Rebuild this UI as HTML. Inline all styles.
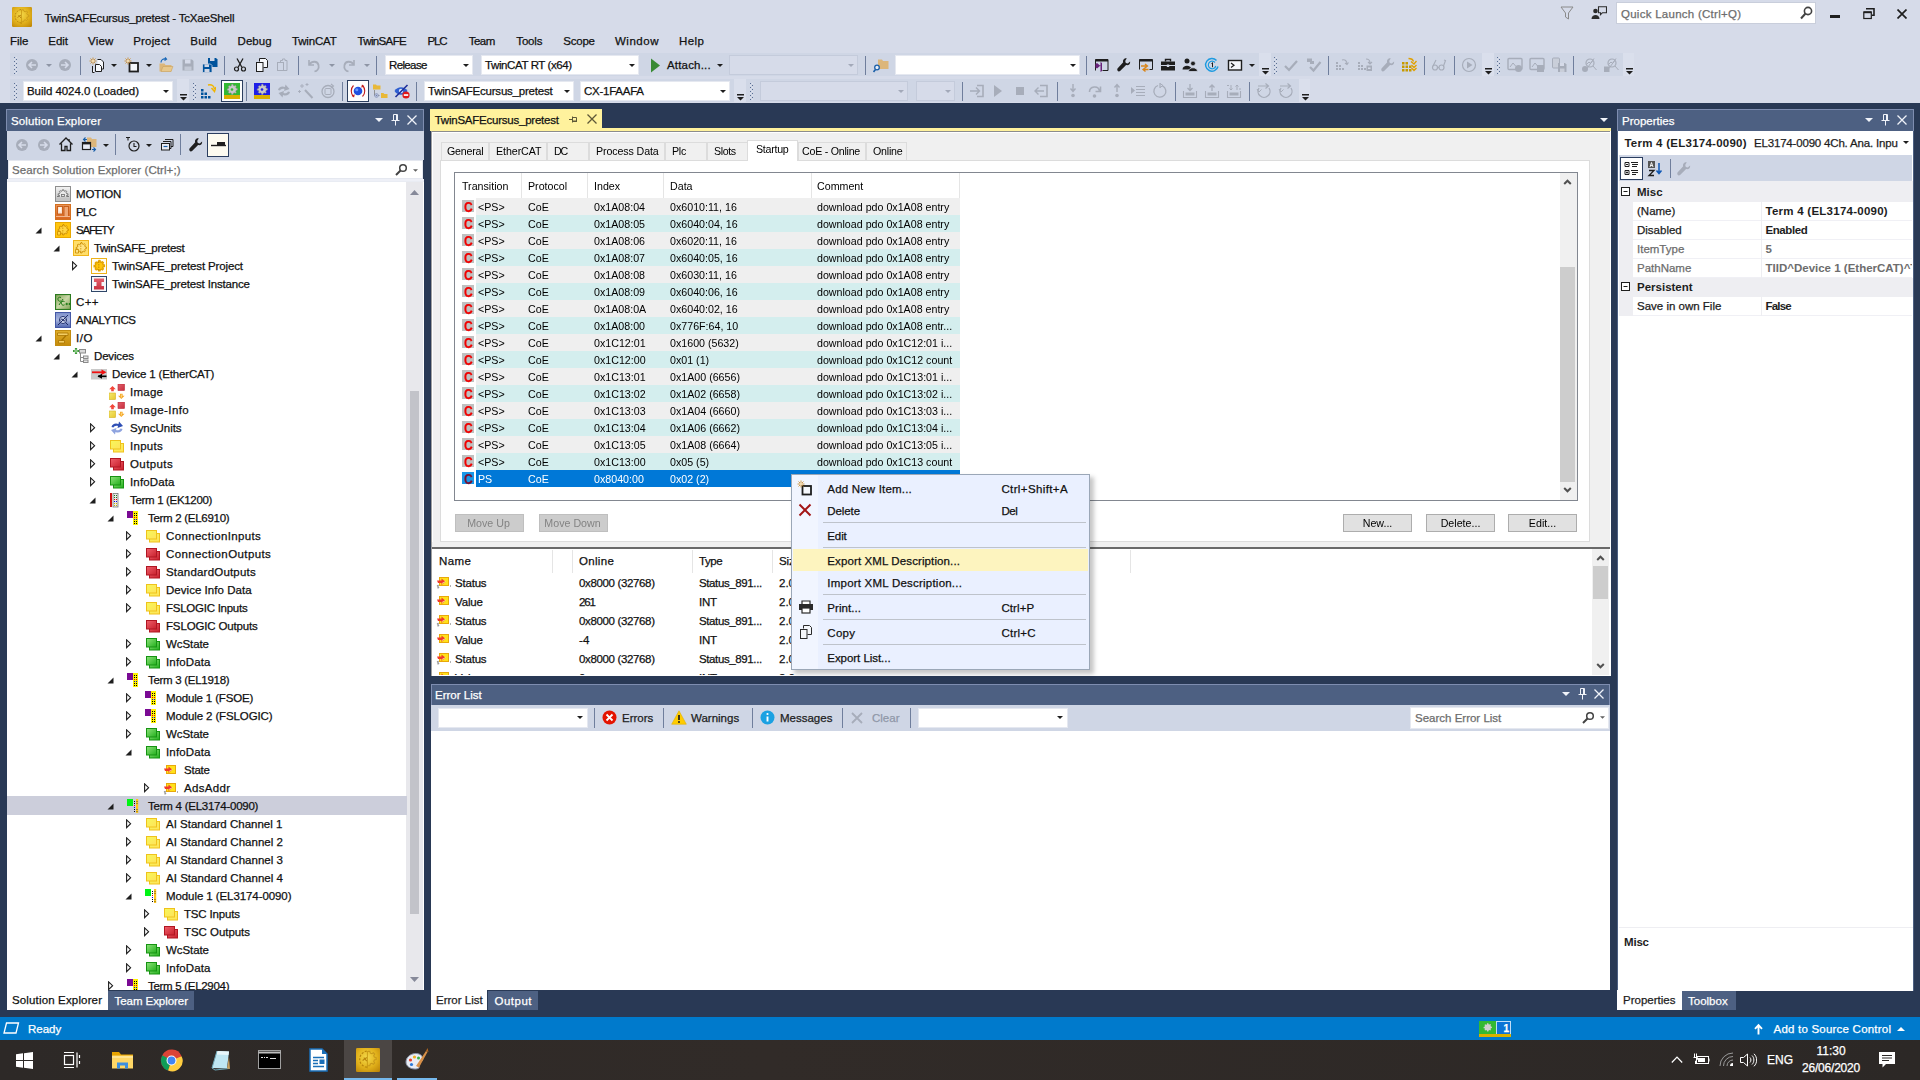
<!DOCTYPE html>
<html><head><meta charset="utf-8"><title>TwinSAFEcursus_pretest - TcXaeShell</title><style>
html,body{margin:0;padding:0;}
body{width:1920px;height:1080px;overflow:hidden;position:relative;background:#D6DBE9;font-family:"Liberation Sans",sans-serif;font-size:11.5px;color:#1E1E1E;}
div,span.t,svg.i{position:absolute;box-sizing:border-box;}
span.t{white-space:pre;display:block;-webkit-text-stroke:0.25px currentColor;}
div>svg{display:block}
span.ms{font-size:11.6px;color:#000;-webkit-text-stroke:0;transform:scaleX(.92);transform-origin:0 50%}
</style></head><body>
<svg width="0" height="0" style="position:absolute;left:-10px;top:-10px"><defs><symbol id="motion" viewBox="0 0 16 16"><defs><linearGradient id="gm" x1="0" y1="0" x2="0" y2="1"><stop offset="0" stop-color="#F4F4F4"/><stop offset="1" stop-color="#BDBDBD"/></linearGradient></defs><rect x=".5" y=".5" width="15" height="15" fill="url(#gm)" stroke="#8E8E8E"/><path d="M2 10.5h2.5v-1.2h-1.3v-1.5l1.4-.3.4-1-.7-1 .9-.8 1 .6 1-.4.2-1.1h1.3l.2 1.1 1 .4 1-.6.9.8-.7 1 .4 1 1.4.3v1.5h-1.3v1.2H14" fill="#E9E9E9" stroke="#6E6E6E" stroke-width=".9"/><rect x="1" y="12" width="14" height="3" fill="#C4C4C4"/><rect x="6.5" y="8.5" width="3" height="2" fill="none" stroke="#6E6E6E" stroke-width=".8"/></symbol><symbol id="plc" viewBox="0 0 16 16"><defs><linearGradient id="gp" x1="0" y1="0" x2="0" y2="1"><stop offset="0" stop-color="#E9945A"/><stop offset="1" stop-color="#D9661D"/></linearGradient></defs><rect x=".5" y=".5" width="15" height="15" fill="url(#gp)" stroke="#D4701F"/><rect x="2.5" y="2.5" width="5" height="7.5" fill="#FBE3D0" stroke="#C55A14" stroke-width=".9"/><rect x="9" y="2.5" width="4.5" height="10" fill="#EFA775" stroke="#C55A14" stroke-width=".9"/><rect x="3.8" y="3.5" width="2.2" height="4" fill="#FFF6EE"/><path d="M1 12.5h14" stroke="#F3B78E" stroke-width="1"/></symbol><symbol id="safety" viewBox="0 0 16 16"><rect x=".5" y=".5" width="15" height="15" fill="#FFC50F" stroke="#E8A800"/><path d="M8 2.5l1 .2.3 1.2 1 .5 1.1-.6.9.9-.6 1.1.5 1 1.2.3v1.4l-1.2.3-.5 1 .6 1.1-.9.9-1.1-.6-1 .5-.3 1.2H7.6l-.3-1.2-1-.5-1.1.6-.9-.9.6-1.1-.5-1L3.2 8.8V7.4l1.2-.3.5-1-.6-1.1.9-.9 1.1.6 1-.5.3-1.2z" fill="#FFD544" stroke="#C98A00" stroke-width=".9"/><path d="M7.8 3v10" stroke="#C98A00" stroke-width=".8" stroke-dasharray="1.5 1"/><path d="M2.5 9.5h3v3.5h-3z" fill="#FFD544" stroke="#C98A00" stroke-width=".8"/></symbol><symbol id="safety2" viewBox="0 0 16 16"><rect x=".5" y=".5" width="15" height="15" fill="#FFDE6B" stroke="#F0B51B"/><path d="M8 2.5l1 .2.3 1.2 1 .5 1.1-.6.9.9-.6 1.1.5 1 1.2.3v1.4l-1.2.3-.5 1 .6 1.1-.9.9-1.1-.6-1 .5-.3 1.2H7.6l-.3-1.2-1-.5-1.1.6-.9-.9.6-1.1-.5-1L3.2 8.8V7.4l1.2-.3.5-1-.6-1.1.9-.9 1.1.6 1-.5.3-1.2z" fill="#FFE382" stroke="#C98A00" stroke-width=".9"/><path d="M7.8 3v10" stroke="#C98A00" stroke-width=".8" stroke-dasharray="1.5 1"/><path d="M2.5 9.5h3v3.5h-3z" fill="#FFE382" stroke="#C98A00" stroke-width=".8"/></symbol><symbol id="safeproj" viewBox="0 0 16 16"><rect x=".5" y=".5" width="15" height="15" fill="#FFFDF5" stroke="#EDB21A"/><path d="M8 2.5l1 .2.3 1.2 1 .5 1.1-.6.9.9-.6 1.1.5 1 1.2.3v1.4l-1.2.3-.5 1 .6 1.1-.9.9-1.1-.6-1 .5-.3 1.2H7.6l-.3-1.2-1-.5-1.1.6-.9-.9.6-1.1-.5-1L3.2 8.8V7.4l1.2-.3.5-1-.6-1.1.9-.9 1.1.6 1-.5.3-1.2z" fill="#FFC60B" stroke="#E4A400" stroke-width="1.4"/><path d="M7.8 3.5v9" stroke="#B97F00" stroke-width=".8" stroke-dasharray="1.5 1"/></symbol><symbol id="safeinst" viewBox="0 0 16 16"><defs><linearGradient id="gi" x1="0" y1="0" x2="0" y2="1"><stop offset="0" stop-color="#E4606D"/><stop offset="1" stop-color="#C8303F"/></linearGradient></defs><rect x=".5" y=".5" width="15" height="15" fill="#F4F6FA" stroke="#2F4668"/><path d="M3 2.5h10v3.5h-2.5v4H13v3.5H3V10h2.5V6H3z" fill="url(#gi)"/></symbol><symbol id="cpp" viewBox="0 0 16 16"><defs><linearGradient id="gc" x1="0" y1="0" x2="1" y2="1"><stop offset="0" stop-color="#7FA254"/><stop offset=".5" stop-color="#C9D6A6"/><stop offset="1" stop-color="#7FA254"/></linearGradient></defs><rect x=".5" y=".5" width="15" height="15" fill="url(#gc)" stroke="#2B7A1F" stroke-width="1.2"/><path d="M6 3.5c-2-1-3.5.5-3 2.3.4 1.5 2 1.8 3 1M9.500 7.500c-2-1-3.500.5-3 2.300.4 1.500 2 1.800 3 1M4 11l4-6M10.500 10h2.500M11.700 8.800v2.400M13.500 10h2M14.500 9v2" fill="none" stroke="#1F7A16" stroke-width="1"/></symbol><symbol id="analytics" viewBox="0 0 16 16"><defs><linearGradient id="ga" x1="0" y1="0" x2="0" y2="1"><stop offset="0" stop-color="#7C8FCB"/><stop offset=".5" stop-color="#A9B6DE"/><stop offset="1" stop-color="#4D63B0"/></linearGradient></defs><rect x=".5" y=".5" width="15" height="15" fill="url(#ga)" stroke="#4458A6"/><circle cx="8" cy="8" r="3.6" fill="#C9D2EC" stroke="#2C3A78" stroke-width="1"/><path d="M3 13l10-10M5.500 8.500c1-2 1.700-2 2.500-.5s1.700 1.500 2.500-.5M10.500 10.500l2.500 2.500" fill="none" stroke="#1F2B66" stroke-width="1"/></symbol><symbol id="io" viewBox="0 0 16 16"><defs><linearGradient id="gio" x1="0" y1="0" x2="0" y2="1"><stop offset="0" stop-color="#E0AE2A"/><stop offset="1" stop-color="#C48A0A"/></linearGradient></defs><rect x=".5" y=".5" width="15" height="15" fill="url(#gio)" stroke="#C28C10"/><path d="M2.500 3h10.500v2.500h-10.500zM3.500 10.500h6v2.500h-6z" fill="#F3CD63" stroke="#A87400" stroke-width=".8"/><path d="M11 5.500l-4.500 5" stroke="#A87400" stroke-width="1.2"/></symbol><symbol id="devices" viewBox="0 0 16 16"><path d="M7.500 5v8.500h3M7.500 9.500h3" fill="none" stroke="#8A8A8A" stroke-width="1"/><rect x="6.500" y="1.500" width="6" height="3.500" fill="#D9D9D9" stroke="#8A8A8A"/><rect x="10.500" y="8" width="4.500" height="2.500" fill="#E4E4E4" stroke="#8A8A8A"/><rect x="10.500" y="12" width="4.500" height="2.500" fill="#E4E4E4" stroke="#8A8A8A"/><path d="M3 0v6M0 3h6" stroke="#3E9A3A" stroke-width="2.200"/><path d="M3 1v4M1 3h4" stroke="#B6E3B0" stroke-width=".8"/></symbol><symbol id="ethercat" viewBox="0 0 16 16"><rect x="0" y="3" width="16" height="10.500" fill="#C9C9C9"/><path d="M1 6.300h10" stroke="#F01010" stroke-width="1.800"/><path d="M10.500 3.500l5 2.800-5 2.800z" fill="#F01010"/><path d="M7 10.300h8.500" stroke="#000" stroke-width="1.600"/><path d="M11 7.800l-4.500 2.500 4.500 2.500z" fill="#000"/></symbol><symbol id="image" viewBox="0 0 16 16"><defs><linearGradient id="gri" x1="0" y1="0" x2="1" y2="1"><stop offset="0" stop-color="#E0626E"/><stop offset="1" stop-color="#C92C3C"/></linearGradient><linearGradient id="gyi" x1="0" y1="0" x2="1" y2="1"><stop offset="0" stop-color="#F4E873"/><stop offset="1" stop-color="#E8C92C"/></linearGradient></defs><rect x="9" y="0" width="6.500" height="6.500" fill="url(#gri)" stroke="#B92A38" stroke-width=".6"/><rect x="0" y="9" width="6.500" height="6.500" fill="url(#gyi)" stroke="#D4B11E" stroke-width=".6"/><path d="M3.500 2l3.300 3.200h-2v2h-2.600v-2h-2z" fill="#F2463A"/><path d="M12.300 15l-3.300-3.200h2v-2h2.600v2h2z" fill="#F5A623"/><path d="M12.300 10.500v3" stroke="#FFE9A8" stroke-width=".8"/></symbol><symbol id="sync" viewBox="0 0 16 16"><path d="M2.500 7c.5-3 4-4.500 7-3l.5-2.500 4 4.500-5.500 2 .5-2c-2-.800-4 .2-4.500 1.500z" fill="#2F4FB5"/><path d="M13.500 9c-.5 3-4 4.500-7 3l-.5 2.500-4-4.500 5.500-2-.5 2c2 .800 4-.2 4.500-1.500z" fill="#8EA3DF"/></symbol><symbol id="vy" viewBox="0 0 16 16"><defs><linearGradient id="gvy" x1="0" y1="0" x2="1" y2="1"><stop offset="0" stop-color="#F6F85A"/><stop offset="1" stop-color="#FFE25A"/></linearGradient></defs><rect x="4.500" y="5.500" width="10" height="8.500" fill="url(#gvy)" stroke="#EFC21C"/><rect x="1.500" y="2.500" width="10" height="8.500" fill="url(#gvy)" stroke="#EFC21C"/></symbol><symbol id="vr" viewBox="0 0 16 16"><defs><linearGradient id="gvr" x1="0" y1="0" x2="1" y2="1"><stop offset="0" stop-color="#F0606C"/><stop offset="1" stop-color="#C8202C"/></linearGradient></defs><rect x="4.500" y="5.500" width="10" height="8.500" fill="url(#gvr)" stroke="#B01622"/><rect x="1.500" y="2.500" width="10" height="8.500" fill="url(#gvr)" stroke="#B01622"/></symbol><symbol id="vg" viewBox="0 0 16 16"><defs><linearGradient id="gvg" x1="0" y1="0" x2="1" y2="1"><stop offset="0" stop-color="#8EE27A"/><stop offset="1" stop-color="#22B01C"/></linearGradient></defs><rect x="4.500" y="5.500" width="10" height="8.500" fill="url(#gvg)" stroke="#169312"/><rect x="1.500" y="2.500" width="10" height="8.500" fill="url(#gvg)" stroke="#169312"/></symbol><symbol id="ek" viewBox="0 0 16 16"><rect x="1" y="1" width="2" height="14" fill="#D01010"/><rect x="4" y="1.500" width="5" height="13.500" fill="#E8E8E8" stroke="#7A7A7A" stroke-width=".8"/><path d="M5 3.500h1M7 3.500h1M5 5.500h1M7 5.500h1" stroke="#1A7A1A"/><path d="M5 7.500h1M7 7.500h1" stroke="#E00000"/><path d="M5 9.500h1M7 9.500h1" stroke="#0000E0"/><path d="M5 11.500h1M7 11.500h1M5 13.500h1M7 13.500h1" stroke="#C8B400"/></symbol><symbol id="termp" viewBox="0 0 16 16"><rect x="0" y="1" width="6" height="7" fill="#7A0A94"/><rect x="6" y="1" width="5" height="14" fill="#FFF200"/><path d="M7 3.500h1M9 3.500h1M7 5.500h1M9 5.500h1M7 13.500h1M9 13.500h1M7 11.500h1M9 11.500h1" stroke="#000" stroke-width="1"/><path d="M7 7.500h1M9 7.500h1" stroke="#E00000" stroke-width="1"/><path d="M7 9.500h1M9 9.500h1" stroke="#0000E0" stroke-width="1"/></symbol><symbol id="termg" viewBox="0 0 16 16"><rect x="0" y="1" width="6" height="7" fill="#00F414"/><rect x="9" y="1" width="2.200" height="14" fill="#FFC61A"/><path d="M7 3.500h1M7 5.500h1M7 13.500h1M7 11.500h1" stroke="#000" stroke-width="1"/><path d="M7 7.500h1" stroke="#E00000"/><path d="M7 9.500h1" stroke="#0000E0"/><path d="M9.500 3.500h1M9.500 5.500h1M9.500 11.500h1M9.500 13.500h1" stroke="#333" stroke-width=".8"/></symbol><symbol id="var" viewBox="0 0 16 16"><rect x="3.500" y="3.500" width="9" height="8" fill="#FFE11A" stroke="#E8A80A"/><path d="M1 6.500h4.500v-2l4 3.300-4 3.300v-2.100H2z" fill="#F03A2A"/><path d="M6 9.500l3.500-2" stroke="#FFF5B0" stroke-width=".8"/></symbol><symbol id="vars" viewBox="0 0 16 16"><rect x="3.500" y="3.500" width="9" height="8" fill="#FFE11A" stroke="#E8A80A"/><path d="M1 6.500h4.500v-2l4 3.300-4 3.300v-2.100H2z" fill="#F03A2A"/><path d="M6 9.500l3.500-2" stroke="#FFF5B0" stroke-width=".8"/><path d="M2.800 11.500c-1-.5-1.800 0-1.500.7s1.600.3 1.700 1-.9 1-1.800.5" fill="none" stroke="#555" stroke-width=".7"/><rect x="14" y="11.500" width="1" height="1" fill="#666"/></symbol><symbol id="expo" viewBox="0 0 7 7"><path d="M6.500 0.500v6h-6z" fill="#1E1E1E"/></symbol><symbol id="expc" viewBox="0 0 6 10"><path d="M.6 .8l4 3.900-4 3.900z" fill="none" stroke="#1E1E1E" stroke-width="1.100"/></symbol><symbol id="navb" viewBox="0 0 16 16"><circle cx="8" cy="8" r="6" fill="#A7ADBA"/><path d="M12 8H5.500M8 5l-3 3 3 3" fill="none" stroke="#D6DBE9" stroke-width="1.600"/></symbol><symbol id="navf" viewBox="0 0 16 16"><circle cx="8" cy="8" r="6" fill="#A7ADBA"/><path d="M4 8h6.500M8 5l3 3-3 3" fill="none" stroke="#D6DBE9" stroke-width="1.600"/></symbol><symbol id="dd" viewBox="0 0 6 3"><path d="M0 0h6l-3 3z" fill="#1E1E1E"/></symbol><symbol id="ddg" viewBox="0 0 6 3"><path d="M0 0h6l-3 3z" fill="#8E95A5"/></symbol><symbol id="ovf" viewBox="0 0 7 7"><path d="M0 0h7v1.500h-7zM0 3h7l-3.500 3.500z" fill="#1E1E1E"/></symbol><symbol id="newproj" viewBox="0 0 16 16"><path d="M8.500 2.500h3.500l2.500 2.500v7h-6" fill="#F5F7FB" stroke="#1E1E1E" stroke-width="1"/><path d="M6.500 7.500h4l2 2v5h-6zM3.500 9v6.500h2" fill="#F5F7FB" stroke="#1E1E1E" stroke-width="1"/><path d="M4 .5v7M.5 4h7M1.500 1.500l5 5M6.500 1.500l-5 5" stroke="#C8841E" stroke-width=".8"/><circle cx="4" cy="4" r="1" fill="#FFF3D6"/></symbol><symbol id="additem" viewBox="0 0 16 16"><rect x="5.500" y="6" width="8.500" height="8.500" fill="#F5F7FB" stroke="#1E1E1E" stroke-width="1.800"/><path d="M4 .5v7M.5 4h7M1.500 1.500l5 5M6.500 1.500l-5 5" stroke="#C8841E" stroke-width=".8"/><circle cx="4" cy="4" r="1" fill="#FFF3D6"/></symbol><symbol id="open" viewBox="0 0 16 16"><path d="M1.500 6.500h5l1 1.500h6v6.500h-12z" fill="#DCB67A"/><path d="M3 14.500l2-5h10l-2 5z" fill="#E8C88C" stroke="#C49A55" stroke-width=".5"/><path d="M3 5.500c0-2.500 2-4 4.500-3.500M7 .5l1.500 1.700-2 1.300" fill="none" stroke="#1A68B8" stroke-width="1.200"/></symbol><symbol id="save" viewBox="0 0 16 16"><path d="M2.500 2.500h9.500l1.500 1.500v9.500h-11z" fill="#A7ADBA"/><rect x="5" y="2.500" width="5.500" height="4" fill="#D6DBE9"/><rect x="4.500" y="9.500" width="7" height="4" fill="#C3C9D6"/></symbol><symbol id="saveall" viewBox="0 0 16 16"><path d="M6 1h8l1.500 1.500v7.500h-9.500z" fill="#00539C"/><rect x="8" y="1" width="4.500" height="3" fill="#CFD6E5"/><path d="M.5 7h8l1.500 1.500v7h-9.500z" fill="#00539C" stroke="#CFD6E5" stroke-width=".8"/><rect x="2.500" y="7.300" width="4.500" height="2.700" fill="#CFD6E5"/><rect x="2.500" y="12" width="5" height="3" fill="#CFD6E5"/></symbol><symbol id="cut" viewBox="0 0 16 16"><path d="M5 1.500l5 9M11 1.500l-5 9" stroke="#1E1E1E" stroke-width="1.300" fill="none"/><circle cx="4.500" cy="12" r="2" fill="none" stroke="#1E1E1E" stroke-width="1.200"/><circle cx="11.500" cy="12" r="2" fill="none" stroke="#1E1E1E" stroke-width="1.200"/></symbol><symbol id="copy" viewBox="0 0 16 16"><path d="M5.500 4.500v-3h6l2 2v7h-4" fill="#F5F7FB" stroke="#1E1E1E"/><rect x="2.500" y="5.500" width="6.500" height="9" fill="#F5F7FB" stroke="#1E1E1E"/></symbol><symbol id="paste" viewBox="0 0 16 16"><rect x="2.500" y="5.500" width="6" height="8" fill="none" stroke="#A7ADBA"/><path d="M5.500 5.500v-2h2v-1.500h2.500v1.500h2v10h-3.500" fill="none" stroke="#A7ADBA"/></symbol><symbol id="undo" viewBox="0 0 16 16"><path d="M3 3v5h5" fill="none" stroke="#A7ADBA" stroke-width="1.600"/><path d="M3.500 7.500c2.500-4 8-3.500 9 .5s-2 6-4 6.500" fill="none" stroke="#A7ADBA" stroke-width="1.800"/></symbol><symbol id="redo" viewBox="0 0 16 16"><path d="M13 3v5h-5" fill="none" stroke="#A7ADBA" stroke-width="1.600"/><path d="M12.500 7.500c-2.500-4-8-3.500-9 .5s2 6 4 6.500" fill="none" stroke="#A7ADBA" stroke-width="1.800"/></symbol><symbol id="play" viewBox="0 0 12 15"><path d="M2 .5l9 7-9 7z" fill="#388A34"/></symbol><symbol id="findfiles" viewBox="0 0 16 16"><path d="M5 2.500h4l1 1.500h5.500v8h-10.500z" fill="#DCB67A"/><circle cx="4" cy="10.500" r="2.300" fill="#E9EEF8" stroke="#1A5FA8" stroke-width="1.300"/><path d="M2.500 12.500l-2 2.500" stroke="#1A5FA8" stroke-width="1.600"/></symbol><symbol id="vsw" viewBox="0 0 16 16"><path d="M2.500 13.500v-11h12.500v11h-5.500" fill="none" stroke="#1E1E1E" stroke-width="1"/><path d="M2.500 3.500h12.500" stroke="#1E1E1E" stroke-width="2"/><path d="M7.500 8.500l-3.500 3-1.500-1v-3.500l1.500-1 3.500 3v-4l1.500 1v8l-1.500 1z" fill="#68217A"/></symbol><symbol id="wrench" viewBox="0 0 16 16"><path d="M10.800 1.200c-2.300-.5-4.400 1.600-3.600 4.100l-5.700 6.200c-1 2 1 3.700 2.600 2.500l6-5.900c2.400.7 4.500-1.300 4-3.700l-2.300 2.200-2-.600-.600-2z" fill="#1E1E1E"/></symbol><symbol id="wrenchg" viewBox="0 0 16 16"><path d="M10.800 1.200c-2.300-.5-4.400 1.600-3.600 4.100l-5.700 6.200c-1 2 1 3.700 2.600 2.500l6-5.900c2.400.7 4.500-1.300 4-3.700l-2.300 2.200-2-.600-.600-2z" fill="#A7ADBA"/></symbol><symbol id="wino" viewBox="0 0 16 16"><path d="M1.500 12.500v-10h13v10h-3" fill="none" stroke="#1E1E1E" stroke-width="1"/><path d="M1.500 3.500h13" stroke="#1E1E1E" stroke-width="2"/><path d="M3 9h6M7 7l2.500 2-2.500 2M5.500 12.500h5M7.500 10.500l-2.500 2 2.500 2" fill="none" stroke="#D9851A" stroke-width="1.300"/></symbol><symbol id="toolbox" viewBox="0 0 16 16"><path d="M5.500 4.500v-2h5v2" fill="none" stroke="#1E1E1E" stroke-width="1.400"/><rect x="1" y="4.500" width="14" height="9" fill="#1E1E1E"/><path d="M1 8.500h14" stroke="#CFD6E5" stroke-width="1"/><rect x="6.800" y="7.500" width="2.400" height="2.500" fill="#CFD6E5"/></symbol><symbol id="people" viewBox="0 0 16 16"><circle cx="5" cy="4" r="2.500" fill="#1E1E1E"/><path d="M.5 12.500c0-5 9-5 9 0z" fill="#1E1E1E"/><circle cx="11" cy="6.500" r="2.400" fill="#1E1E1E" stroke="#CFD6E5" stroke-width=".8"/><path d="M6.500 14.500c0-5 9-5 9 0z" fill="#1E1E1E" stroke="#CFD6E5" stroke-width=".8"/></symbol><symbol id="clock1" viewBox="0 0 16 16"><path d="M12.500 3.500a6.300 6.300 0 1 0 1.500 6" fill="none" stroke="#1E9BE0" stroke-width="1.500"/><path d="M11 5.500a3.800 3.800 0 1 0 .8 3.500" fill="none" stroke="#1E9BE0" stroke-width="1.200"/><path d="M7.500 6.500l1-.800v4.500" fill="none" stroke="#1E1E1E" stroke-width="1"/></symbol><symbol id="console" viewBox="0 0 16 16"><rect x="1.500" y="3.500" width="13" height="9.500" fill="#F5F7FB" stroke="#1E1E1E" stroke-width="1.400"/><path d="M4 6l3 2.200-3 2.200" fill="none" stroke="#1E1E1E" stroke-width="1.200"/></symbol><symbol id="grip" viewBox="0 0 3 17"><path d="M0 .5h1M2 2.500h1M0 4.500h1M2 6.500h1M0 8.500h1M2 10.500h1M0 12.500h1M2 14.500h1M0 16.500h1" stroke="#5A6F94" stroke-width="1"/><path d="M2 .5h1M0 2.500h1M2 4.500h1M0 6.500h1M2 8.500h1M0 10.500h1M2 12.500h1M0 14.500h1M2 16.500h1" stroke="#E9EDF6" stroke-width="1" opacity=".6"/></symbol><symbol id="chk1" viewBox="0 0 16 16"><path d="M2 9l4 4 8-9" fill="none" stroke="#A7ADBA" stroke-width="2.200"/></symbol><symbol id="chk2" viewBox="0 0 16 16"><rect x="1" y="1.500" width="5" height="3.500" fill="#A7ADBA"/><rect x="4" y="4" width="4" height="3" fill="#A7ADBA"/><path d="M4 10l3.500 3.500 7-8.500" fill="none" stroke="#A7ADBA" stroke-width="2.200"/></symbol><symbol id="grid1" viewBox="0 0 16 16"><path d="M2 8h2v2h-2zM5 8h2v2h-2zM2 11h2v2h-2zM5 11h2v2h-2zM8 11h2v2h-2zM2 5h2v2h-2z" fill="#A7ADBA"/><path d="M8 3c3-1 5 1 5 4M11 6l2 1.500 1.500-2" fill="none" stroke="#A7ADBA" stroke-width="1.100"/></symbol><symbol id="grid2" viewBox="0 0 16 16"><path d="M1 8h2v2h-2zM4 8h2v2h-2zM1 11h2v2h-2zM4 11h2v2h-2zM7 11h2v2h-2zM1 5h2v2h-2z" fill="#A7ADBA"/><path d="M9 2c3 0 4 1 4 4M11 5l2 2 2-2" fill="none" stroke="#A7ADBA" stroke-width="1.100"/><rect x="9.500" y="8.500" width="5.500" height="5.500" fill="#A7ADBA"/><rect x="11" y="10.500" width="2.500" height="1.500" fill="#D6DBE9"/></symbol><symbol id="gridy" viewBox="0 0 16 16"><path d="M1 5h2.500v2.500h-2.500zM4.500 5h2.500v2.500h-2.500zM1 8.500h2.500v2.500h-2.500zM4.500 8.500h2.500v2.500h-2.500zM8 8.500h2.500v2.500h-2.500zM1 12h2.500v2.500h-2.500zM4.500 12h2.500v2.500h-2.500zM8 12h2.500v2.500h-2.500z" fill="#C79A00"/><path d="M7.500 1.500c3 0 4.500 1 5 3M10 4.500l3 2.500 2.500-3M10.500 8l2.500 2.500 2.500-2.500M10.500 11l2.500 2.500 2.500-2.500" fill="none" stroke="#E0A000" stroke-width="1.300"/></symbol><symbol id="glasses" viewBox="0 0 16 16"><circle cx="4" cy="10.500" r="2.500" fill="none" stroke="#A7ADBA" stroke-width="1.200"/><circle cx="10.500" cy="10.500" r="2.500" fill="none" stroke="#A7ADBA" stroke-width="1.200"/><path d="M6.500 10.500h1.500M2 9l3-6M12.500 9l2-5.500-1.500-.5" fill="none" stroke="#A7ADBA" stroke-width="1.100"/></symbol><symbol id="playc" viewBox="0 0 16 16"><circle cx="8" cy="8" r="6.500" fill="none" stroke="#A7ADBA" stroke-width="1.200"/><path d="M6 4.500l5.500 3.500-5.500 3.500z" fill="#A7ADBA"/></symbol><symbol id="img1" viewBox="0 0 16 16"><rect x="1" y="1.500" width="14" height="11" rx="1" fill="none" stroke="#A7ADBA" stroke-width="1.400"/><path d="M3 10l3-4 3 3.500" fill="none" stroke="#A7ADBA"/><circle cx="11.500" cy="11.500" r="3.500" fill="#A7ADBA"/></symbol><symbol id="img2" viewBox="0 0 16 16"><rect x="1" y="1.500" width="14" height="11" rx="1" fill="none" stroke="#A7ADBA" stroke-width="1.400"/><path d="M3 10l3-4 3 3.500" fill="none" stroke="#A7ADBA"/><rect x="8" y="8" width="7" height="7" fill="#A7ADBA"/></symbol><symbol id="img3" viewBox="0 0 16 16"><rect x="1.500" y="1" width="7" height="10" rx="1" fill="#C9CED9" stroke="#A7ADBA"/><path d="M7 6h7l1.500 1.500v7.500h-8.500z" fill="#A7ADBA"/><rect x="9" y="6" width="4" height="3" fill="#D6DBE9"/><rect x="9" y="11.500" width="4.500" height="3.500" fill="#C9CED9"/></symbol><symbol id="mag1" viewBox="0 0 16 16"><circle cx="9" cy="6" r="4" fill="none" stroke="#A7ADBA" stroke-width="1.200"/><path d="M6 7l2-2 1.500 1.500 2-2.500M12 9l3.500 4M13 1.500l-7 10" fill="none" stroke="#A7ADBA" stroke-width="1"/><circle cx="4" cy="12" r="3" fill="#A7ADBA"/></symbol><symbol id="mag2" viewBox="0 0 16 16"><circle cx="9" cy="6" r="4" fill="none" stroke="#A7ADBA" stroke-width="1.200"/><path d="M6 7l2-2 1.500 1.500 2-2.500M12 9l3.500 4M13 1.500l-7 10" fill="none" stroke="#A7ADBA" stroke-width="1"/><rect x="1" y="9.500" width="5.500" height="5.500" fill="#A7ADBA"/></symbol><symbol id="bldarrow" viewBox="0 0 16 16"><path d="M1 6h2.500v2.500h-2.500zM1 9.500h2.500v2.500h-2.500zM4.500 9.500h2.500v2.500h-2.500zM1 13h2.500v2.500h-2.500zM4.500 13h2.500v2.500h-2.500zM8 13h2.500v2.500h-2.500z" fill="#00539C"/><path d="M8 2c4-1 6 1 6.500 4M11.500 5l3 3.500 1.500-4.500" fill="none" stroke="#F0B400" stroke-width="1.500"/></symbol><symbol id="cfgg" viewBox="0 0 16 16"><rect x="0" y="0" width="16" height="12" fill="#33B933"/><rect x="0" y="12" width="16" height="4" fill="#D9B000"/><path d="M8 2.5l1 .2.3 1.2 1 .5 1.1-.6.9.9-.6 1.1.5 1 1.2.3v1.4l-1.2.3-.5 1 .6 1.1-.9.9-1.1-.6-1 .5-.3 1.2H7.6l-.3-1.2-1-.5-1.1.6-.9-.9.6-1.1-.5-1L3.2 8.8V7.4l1.2-.3.5-1-.6-1.1.9-.9 1.1.6 1-.5.3-1.2z" fill="#C9C9C9" stroke="#8A8A8A" stroke-width=".5" transform="translate(0,-1.500)"/><circle cx="8" cy="6.500" r="1.300" fill="#33B933"/></symbol><symbol id="cfgb" viewBox="0 0 16 16"><rect x="0" y="0" width="16" height="12" fill="#1F1FE8"/><rect x="0" y="12" width="16" height="4" fill="#D9B000"/><path d="M8 2.5l1 .2.3 1.2 1 .5 1.1-.6.9.9-.6 1.1.5 1 1.2.3v1.4l-1.2.3-.5 1 .6 1.1-.9.9-1.1-.6-1 .5-.3 1.2H7.6l-.3-1.2-1-.5-1.1.6-.9-.9.6-1.1-.5-1L3.2 8.8V7.4l1.2-.3.5-1-.6-1.1.9-.9 1.1.6 1-.5.3-1.2z" fill="#C9C9C9" stroke="#8A8A8A" stroke-width=".5" transform="translate(0,-1.500)"/><circle cx="8" cy="6.500" r="1.300" fill="#1F1FE8"/></symbol><symbol id="syncg" viewBox="0 0 16 16"><path d="M2 7c.5-3 4-4.500 7-3l.5-2.500 4 4.500-5.500 2 .5-2c-2-.800-4 .2-4.500 1.500z" fill="#A7ADBA"/><path d="M14 9c-.5 3-4 4.500-7 3l-.5 2.500-4-4.500 5.500-2-.5 2c2 .800 4-.2 4.500-1.500z" fill="#A7ADBA"/></symbol><symbol id="wand" viewBox="0 0 16 16"><path d="M7 7l7.500 8" stroke="#A7ADBA" stroke-width="2"/><path d="M4 1v4M2 3h4M9 0v3M7.500 1.500h3M1.500 7v3M0 8.500h3" stroke="#A7ADBA" stroke-width=".9"/></symbol><symbol id="circg" viewBox="0 0 16 16"><circle cx="8" cy="8.500" r="6" fill="none" stroke="#A7ADBA" stroke-width="1.300"/><rect x="5" y="5.500" width="6" height="6" rx="1" fill="none" stroke="#A7ADBA"/><path d="M11 1l2.500 2-2.500 2" fill="none" stroke="#A7ADBA" stroke-width="1.100"/></symbol><symbol id="toggle" viewBox="0 0 16 16"><circle cx="8" cy="8" r="4.300" fill="#1F4FE0"/><circle cx="6.800" cy="6.800" r="1.500" fill="#6C9BFF"/><path d="M3.500 2.500c-3 3-3 8 0 11M2 12.500l1.700 1.200.5-2.200" fill="none" stroke="#C01818" stroke-width="1.100"/><path d="M12.500 13.500c3-3 3-8 0-11M14 3.500l-1.700-1.200-.5 2.200" fill="none" stroke="#C01818" stroke-width="1.100"/></symbol><symbol id="foldtree" viewBox="0 0 16 16"><path d="M1 1.500h3l.8 1h3.700v4h-7.500z" fill="#E8B838"/><path d="M2.500 7v5.500h5" fill="none" stroke="#8A8A8A" stroke-width=".9"/><circle cx="4.500" cy="12.500" r="1.800" fill="#E6ECFA" stroke="#6A7AA8" stroke-width=".7"/><path d="M3.500 12.500h2M4.500 11.500v2" stroke="#6A7AA8" stroke-width=".7"/><path d="M9 10h2.500l.8 1h3.200v4h-6.500z" fill="#E8B838"/></symbol><symbol id="eyestop" viewBox="0 0 16 16"><path d="M.5 8c3-5 10-5 13 0-3 5-10 5-13 0z" fill="#2F5FD0"/><circle cx="7" cy="8" r="2.200" fill="#DCE6FA"/><path d="M1.500 14l12-12" stroke="#1F2F9A" stroke-width="1.600"/><circle cx="12" cy="12" r="3.600" fill="#E01818"/><rect x="9.800" y="11.200" width="4.400" height="1.700" fill="#fff"/></symbol><symbol id="d_in" viewBox="0 0 16 16"><path d="M1 8h9M7 4.500l3.500 3.500-3.500 3.500" fill="none" stroke="#A7ADBA" stroke-width="1.400"/><path d="M8 2.500h6v11h-6" fill="none" stroke="#A7ADBA" stroke-width="1.600"/></symbol><symbol id="d_play" viewBox="0 0 16 16"><path d="M4 2l8 6-8 6z" fill="#A7ADBA"/></symbol><symbol id="d_stop" viewBox="0 0 16 16"><rect x="4" y="4" width="8" height="8" fill="#A7ADBA"/></symbol><symbol id="d_out" viewBox="0 0 16 16"><path d="M10 8h-9M4.500 4.500l-3.500 3.500 3.500 3.500" fill="none" stroke="#A7ADBA" stroke-width="1.400"/><path d="M6 2.500h7v11h-7" fill="none" stroke="#A7ADBA" stroke-width="1.600"/></symbol><symbol id="s_into" viewBox="0 0 16 16"><path d="M8 1v7M5.500 5.500l2.500 3 2.500-3" fill="none" stroke="#A7ADBA" stroke-width="1.400"/><circle cx="8" cy="12.500" r="1.800" fill="#A7ADBA"/></symbol><symbol id="s_over" viewBox="0 0 16 16"><path d="M2.500 9c0-6 9-7 10-1M13.500 3.500v5h-5" fill="none" stroke="#A7ADBA" stroke-width="1.600"/><circle cx="7.500" cy="13" r="1.800" fill="#A7ADBA"/></symbol><symbol id="s_out" viewBox="0 0 16 16"><path d="M8 9v-7M5.500 4.500l2.500-3 2.500 3" fill="none" stroke="#A7ADBA" stroke-width="1.400"/><circle cx="8" cy="12.500" r="1.800" fill="#A7ADBA"/></symbol><symbol id="s_lines" viewBox="0 0 16 16"><path d="M1 4l4 3.500-4 3.500z" fill="#A7ADBA"/><path d="M6 3.500h9M6 6.500h9M6 9.500h9M6 12.500h9" stroke="#A7ADBA" stroke-width="1.200"/></symbol><symbol id="s_reset" viewBox="0 0 16 16"><path d="M6 2.500a6 6 0 1 0 4.500.3" fill="none" stroke="#A7ADBA" stroke-width="1.300"/><path d="M8 0v5" stroke="#A7ADBA" stroke-width="1.200"/><path d="M8 .5l3 2-3 2" fill="none" stroke="#A7ADBA" stroke-width="1"/></symbol><symbol id="tray1" viewBox="0 0 16 16"><path d="M1.500 8v6.500h13v-6.500" fill="none" stroke="#A7ADBA" stroke-width="1.100"/><rect x="3.500" y="9.500" width="9" height="3" fill="#A7ADBA"/><path d="M8 1v6M5.500 5l2.500 2.500 2.500-2.500" fill="none" stroke="#A7ADBA" stroke-width="1.300"/></symbol><symbol id="tray2" viewBox="0 0 16 16"><path d="M1.500 8v6.500h13v-6.500" fill="none" stroke="#A7ADBA" stroke-width="1.100"/><rect x="3.500" y="9.500" width="9" height="3" fill="#A7ADBA"/><path d="M8 8v-6M5.500 4.500l2.500-2.500 2.500 2.500" fill="none" stroke="#A7ADBA" stroke-width="1.300"/></symbol><symbol id="tray3" viewBox="0 0 16 16"><path d="M1.500 8v6.500h13v-6.500" fill="none" stroke="#A7ADBA" stroke-width="1.100"/><rect x="3.500" y="9.500" width="9" height="3" fill="#A7ADBA"/><path d="M5 2v5M3.500 5.500l1.500 1.500 1.500-1.500M11 7v-5M9.500 3.500l1.500-1.500 1.500 1.500M1 2.500h2M13 6h2" fill="none" stroke="#A7ADBA" stroke-width="1"/></symbol><symbol id="loop1" viewBox="0 0 16 16"><path d="M3 5a6 6 0 1 0 10 0" fill="none" stroke="#A7ADBA" stroke-width="1.300"/><path d="M2 3h10M9.500 .5l3 2.500-3 2.500" fill="none" stroke="#A7ADBA" stroke-width="1.200"/><path d="M1 6l2 3 2.500-2.500" fill="none" stroke="#A7ADBA" stroke-width="1"/></symbol></defs></svg>
<!-- title bar -->
<div style="left:12px;top:7px;width:20px;height:20px;"><svg width="20" height="20" viewBox="0 0 20 20"><defs><radialGradient id="gti" cx=".45" cy=".4" r=".75"><stop offset="0" stop-color="#F3D84A"/><stop offset=".55" stop-color="#E2B21C"/><stop offset="1" stop-color="#C08808"/></radialGradient></defs><rect width="20" height="20" rx="1.200" fill="url(#gti)"/><path d="M9.500 2.500v14.500" stroke="#C49210" stroke-width=".7"/><path d="M9 2.500l-2 .6-1.700 1.300-1.500 1.800-.7 2 0 2.500.9 2.200 1.700 1.800 2 1 1.500.3" fill="none" stroke="#B9850C" stroke-width="1" stroke-dasharray="1.800 1.200"/><path d="M10 2.800l1.500 0 .5 1.500 1.200.5 1.300-.8 1.100 1.100-.8 1.300.5 1.200 1.500.4v1.600l-1.500.4-.5 1.200.8 1.300-1.100 1.100-1.300-.8-1.200.5-.5 1.500h-1.500" fill="none" stroke="#C8981A" stroke-width=".9"/><path d="M5.500 10.500l3.500-2.500M6.500 8l2.500 3" stroke="#B9850C" stroke-width="1"/></svg></div>
<span class="t" style="left:44.5px;top:10px;line-height:16px;height:16px;color:#111;letter-spacing:-0.196px;">TwinSAFEcursus_pretest - TcXaeShell</span>
<div style="left:1560px;top:6px;width:14px;height:15px;"><svg width="14" height="15" viewBox="0 0 14 15"><path d="M1 1h12l-4.500 6v6l-3-2v-4z" fill="none" stroke="#8A8A8A" stroke-width="1"/></svg></div>
<div style="left:1591px;top:6px;width:16px;height:15px;"><svg width="16" height="15" viewBox="0 0 16 15"><circle cx="4.500" cy="5" r="2.300" fill="#2B2B2B"/><path d="M.5 13c0-5.500 8-5.500 8 0z" fill="#2B2B2B"/><path d="M7.500 .7h8v6h-4l-2 2v-2h-2z" fill="#D6DBE9" stroke="#2B2B2B" stroke-width="1.100"/></svg></div>
<div style="left:1616px;top:2px;width:200px;height:22px;background:#fff;border:1px solid #C9CEDB;"></div>
<span class="t" style="left:1621px;top:6px;line-height:16px;height:16px;color:#6D6D6D;letter-spacing:0.263px;">Quick Launch (Ctrl+Q)</span>
<div style="left:1800px;top:6px;width:13px;height:14px;"><svg width="13" height="14" viewBox="0 0 13 14"><circle cx="8" cy="5" r="3.600" fill="none" stroke="#424242" stroke-width="1.600"/><path d="M5.500 7.500l-4.500 5" stroke="#424242" stroke-width="2"/></svg></div>
<div style="left:1830px;top:15px;width:10px;height:3px;background:#1E1E1E"></div>
<div style="left:1863px;top:8px;width:12px;height:12px;"><svg width="12" height="12" viewBox="0 0 12 12"><path d="M3 .8h8v6.500h-2" fill="none" stroke="#1E1E1E" stroke-width="1.600"/><rect x=".8" y="4" width="7.500" height="6.500" fill="none" stroke="#1E1E1E" stroke-width="1.200"/><path d="M.8 4.300h7.500" stroke="#1E1E1E" stroke-width="1.800"/></svg></div>
<div style="left:1897px;top:9px;width:10px;height:10px;"><svg width="10" height="10" viewBox="0 0 10 10"><path d="M.5 .5l9 9M9.500 .5l-9 9" stroke="#1E1E1E" stroke-width="1.700"/></svg></div>
<!-- menu -->
<span class="t" style="left:10px;top:32.5px;line-height:16px;height:16px;color:#111;letter-spacing:-0.077px;">File</span>
<span class="t" style="left:48.3px;top:32.5px;line-height:16px;height:16px;color:#111;letter-spacing:-0.043px;">Edit</span>
<span class="t" style="left:88px;top:32.5px;line-height:16px;height:16px;color:#111;letter-spacing:0.194px;">View</span>
<span class="t" style="left:133.3px;top:32.5px;line-height:16px;height:16px;color:#111;letter-spacing:0.151px;">Project</span>
<span class="t" style="left:190.3px;top:32.5px;line-height:16px;height:16px;color:#111;letter-spacing:0.180px;">Build</span>
<span class="t" style="left:237.5px;top:32.5px;line-height:16px;height:16px;color:#111;letter-spacing:0.077px;">Debug</span>
<span class="t" style="left:292px;top:32.5px;line-height:16px;height:16px;color:#111;letter-spacing:-0.183px;">TwinCAT</span>
<span class="t" style="left:357.5px;top:32.5px;line-height:16px;height:16px;color:#111;letter-spacing:-0.641px;">TwinSAFE</span>
<span class="t" style="left:427.5px;top:32.5px;line-height:16px;height:16px;color:#111;letter-spacing:-1.188px;">PLC</span>
<span class="t" style="left:468.7px;top:32.5px;line-height:16px;height:16px;color:#111;letter-spacing:-0.508px;">Team</span>
<span class="t" style="left:516.3px;top:32.5px;line-height:16px;height:16px;color:#111;letter-spacing:-0.165px;">Tools</span>
<span class="t" style="left:563.3px;top:32.5px;line-height:16px;height:16px;color:#111;letter-spacing:-0.227px;">Scope</span>
<span class="t" style="left:615px;top:32.5px;line-height:16px;height:16px;color:#111;letter-spacing:0.519px;">Window</span>
<span class="t" style="left:679px;top:32.5px;line-height:16px;height:16px;color:#111;letter-spacing:0.448px;">Help</span>
<!-- toolbars -->
<div style="left:10px;top:53px;width:1249px;height:23px;background:#CFD6E5"></div>
<div style="left:1259px;top:53px;width:12px;height:23px;background:#DADFEC"></div>
<svg class="i" style="left:1262px;top:68px;" width="7" height="7"><use href="#ovf"/></svg>
<div style="left:1271px;top:53px;width:211px;height:23px;background:#CFD6E5"></div>
<div style="left:1482px;top:53px;width:12px;height:23px;background:#DADFEC"></div>
<svg class="i" style="left:1485px;top:68px;" width="7" height="7"><use href="#ovf"/></svg>
<div style="left:1494px;top:53px;width:129px;height:23px;background:#CFD6E5"></div>
<div style="left:1623px;top:53px;width:11px;height:23px;background:#DADFEC"></div>
<svg class="i" style="left:1626px;top:68px;" width="7" height="7"><use href="#ovf"/></svg>
<div style="left:10px;top:79px;width:167px;height:23px;background:#CFD6E5"></div>
<div style="left:177px;top:79px;width:12px;height:23px;background:#DADFEC"></div>
<svg class="i" style="left:180px;top:94px;" width="7" height="7"><use href="#ovf"/></svg>
<div style="left:189px;top:79px;width:545px;height:23px;background:#CFD6E5"></div>
<div style="left:734px;top:79px;width:12px;height:23px;background:#DADFEC"></div>
<svg class="i" style="left:737px;top:94px;" width="7" height="7"><use href="#ovf"/></svg>
<div style="left:746px;top:79px;width:553px;height:23px;background:#CFD6E5"></div>
<div style="left:1299px;top:79px;width:11px;height:23px;background:#DADFEC"></div>
<svg class="i" style="left:1302px;top:94px;" width="7" height="7"><use href="#ovf"/></svg>
<svg class="i" style="left:14px;top:57px;" width="3" height="17"><use href="#grip"/></svg>
<svg class="i" style="left:24px;top:57px;" width="16" height="16"><use href="#navb"/></svg>
<svg class="i" style="left:46px;top:64px;" width="6" height="3"><use href="#ddg"/></svg>
<svg class="i" style="left:57px;top:57px;" width="16" height="16"><use href="#navf"/></svg>
<div style="left:80px;top:56px;width:1px;height:19px;background:#6F7E9C"></div>
<svg class="i" style="left:89px;top:57px;" width="16" height="16"><use href="#newproj"/></svg>
<svg class="i" style="left:111px;top:64px;" width="6" height="3"><use href="#dd"/></svg>
<svg class="i" style="left:124px;top:57px;" width="16" height="16"><use href="#additem"/></svg>
<svg class="i" style="left:146px;top:64px;" width="6" height="3"><use href="#dd"/></svg>
<svg class="i" style="left:158px;top:57px;" width="16" height="16"><use href="#open"/></svg>
<svg class="i" style="left:180px;top:57px;" width="16" height="16"><use href="#save"/></svg>
<svg class="i" style="left:202px;top:57px;" width="16" height="16"><use href="#saveall"/></svg>
<div style="left:224px;top:56px;width:1px;height:19px;background:#6F7E9C"></div>
<svg class="i" style="left:232px;top:57px;" width="16" height="16"><use href="#cut"/></svg>
<svg class="i" style="left:254px;top:57px;" width="16" height="16"><use href="#copy"/></svg>
<svg class="i" style="left:275px;top:57px;" width="16" height="16"><use href="#paste"/></svg>
<div style="left:298px;top:56px;width:1px;height:19px;background:#6F7E9C"></div>
<svg class="i" style="left:306px;top:57px;" width="16" height="16"><use href="#undo"/></svg>
<svg class="i" style="left:329px;top:64px;" width="6" height="3"><use href="#ddg"/></svg>
<svg class="i" style="left:341px;top:57px;" width="16" height="16"><use href="#redo"/></svg>
<svg class="i" style="left:364px;top:64px;" width="6" height="3"><use href="#ddg"/></svg>
<div style="left:376px;top:56px;width:1px;height:19px;background:#6F7E9C"></div>
<div style="left:385px;top:55px;width:88px;height:20px;background:#fff;border:1px solid #E5E8F0"></div>
<svg class="i" style="left:463px;top:64px;" width="6" height="3"><use href="#dd"/></svg>
<span class="t" style="left:389px;top:56.5px;line-height:16px;height:16px;color:#111;letter-spacing:-0.634px;">Release</span>
<div style="left:481px;top:55px;width:158px;height:20px;background:#fff;border:1px solid #E5E8F0"></div>
<svg class="i" style="left:629px;top:64px;" width="6" height="3"><use href="#dd"/></svg>
<span class="t" style="left:485px;top:56.5px;line-height:16px;height:16px;color:#111;letter-spacing:-0.393px;">TwinCAT RT (x64)</span>
<svg class="i" style="left:649px;top:58px;" width="12" height="15"><use href="#play"/></svg>
<span class="t" style="left:667px;top:56.5px;line-height:16px;height:16px;color:#111;letter-spacing:0.177px;">Attach...</span>
<svg class="i" style="left:717px;top:64px;" width="6" height="3"><use href="#dd"/></svg>
<div style="left:729px;top:55px;width:129px;height:20px;background:#D6DBE9;border:1px solid #C4CBDB"></div>
<svg class="i" style="left:848px;top:64px;opacity:.7" width="6" height="3"><use href="#ddg"/></svg>
<div style="left:865px;top:56px;width:1px;height:19px;background:#6F7E9C"></div>
<svg class="i" style="left:873px;top:57px;" width="16" height="16"><use href="#findfiles"/></svg>
<div style="left:895px;top:55px;width:185px;height:20px;background:#fff;border:1px solid #E5E8F0"></div>
<svg class="i" style="left:1070px;top:64px;" width="6" height="3"><use href="#dd"/></svg>
<div style="left:1086px;top:56px;width:1px;height:19px;background:#6F7E9C"></div>
<svg class="i" style="left:1093px;top:57px;" width="16" height="16"><use href="#vsw"/></svg>
<svg class="i" style="left:1116px;top:57px;" width="16" height="16"><use href="#wrench"/></svg>
<svg class="i" style="left:1138px;top:57px;" width="16" height="16"><use href="#wino"/></svg>
<svg class="i" style="left:1160px;top:57px;" width="16" height="16"><use href="#toolbox"/></svg>
<svg class="i" style="left:1182px;top:57px;" width="16" height="16"><use href="#people"/></svg>
<svg class="i" style="left:1204px;top:57px;" width="16" height="16"><use href="#clock1"/></svg>
<svg class="i" style="left:1227px;top:57px;" width="16" height="16"><use href="#console"/></svg>
<svg class="i" style="left:1249px;top:64px;" width="6" height="3"><use href="#dd"/></svg>
<svg class="i" style="left:1274px;top:57px;" width="3" height="17"><use href="#grip"/></svg>
<svg class="i" style="left:1283px;top:57px;" width="16" height="16"><use href="#chk1"/></svg>
<svg class="i" style="left:1306px;top:57px;" width="16" height="16"><use href="#chk2"/></svg>
<div style="left:1328px;top:56px;width:1px;height:19px;background:#6F7E9C"></div>
<svg class="i" style="left:1334px;top:57px;" width="16" height="16"><use href="#grid1"/></svg>
<svg class="i" style="left:1357px;top:57px;" width="16" height="16"><use href="#grid2"/></svg>
<svg class="i" style="left:1380px;top:57px;" width="16" height="16"><use href="#wrenchg"/></svg>
<svg class="i" style="left:1401px;top:57px;" width="16" height="16"><use href="#gridy"/></svg>
<div style="left:1424px;top:56px;width:1px;height:19px;background:#6F7E9C"></div>
<svg class="i" style="left:1431px;top:57px;" width="16" height="16"><use href="#glasses"/></svg>
<div style="left:1454px;top:56px;width:1px;height:19px;background:#6F7E9C"></div>
<svg class="i" style="left:1461px;top:57px;" width="16" height="16"><use href="#playc"/></svg>
<svg class="i" style="left:1497px;top:57px;" width="3" height="17"><use href="#grip"/></svg>
<svg class="i" style="left:1507px;top:57px;" width="16" height="16"><use href="#img1"/></svg>
<svg class="i" style="left:1529px;top:57px;" width="16" height="16"><use href="#img2"/></svg>
<svg class="i" style="left:1551px;top:57px;" width="16" height="16"><use href="#img3"/></svg>
<div style="left:1573px;top:56px;width:1px;height:19px;background:#6F7E9C"></div>
<svg class="i" style="left:1581px;top:57px;" width="16" height="16"><use href="#mag1"/></svg>
<svg class="i" style="left:1603px;top:57px;" width="16" height="16"><use href="#mag2"/></svg>
<svg class="i" style="left:14px;top:83px;" width="3" height="17"><use href="#grip"/></svg>
<div style="left:23px;top:81px;width:150px;height:20px;background:#fff;border:1px solid #E5E8F0"></div>
<svg class="i" style="left:163px;top:90px;" width="6" height="3"><use href="#dd"/></svg>
<span class="t" style="left:27px;top:82.5px;line-height:16px;height:16px;color:#111;letter-spacing:-0.059px;">Build 4024.0 (Loaded)</span>
<svg class="i" style="left:193px;top:83px;" width="3" height="17"><use href="#grip"/></svg>
<svg class="i" style="left:200px;top:83px;" width="16" height="16"><use href="#bldarrow"/></svg>
<div style="left:221px;top:80px;width:22px;height:22px;background:#FDFDFD;border:1px solid #2B3E5F"></div>
<svg class="i" style="left:224px;top:83px;" width="16" height="16"><use href="#cfgg"/></svg>
<div style="left:246px;top:82px;width:1px;height:19px;background:#6F7E9C"></div>
<svg class="i" style="left:254px;top:83px;" width="16" height="16"><use href="#cfgb"/></svg>
<svg class="i" style="left:276px;top:83px;" width="16" height="16"><use href="#syncg"/></svg>
<svg class="i" style="left:298px;top:83px;" width="16" height="16"><use href="#wand"/></svg>
<svg class="i" style="left:320px;top:83px;" width="16" height="16"><use href="#circg"/></svg>
<div style="left:342px;top:82px;width:1px;height:19px;background:#6F7E9C"></div>
<div style="left:347px;top:80px;width:22px;height:22px;background:#FDFDFD;border:1px solid #2B3E5F"></div>
<svg class="i" style="left:350px;top:83px;" width="16" height="16"><use href="#toggle"/></svg>
<svg class="i" style="left:372px;top:83px;" width="16" height="16"><use href="#foldtree"/></svg>
<svg class="i" style="left:394px;top:83px;" width="16" height="16"><use href="#eyestop"/></svg>
<div style="left:416px;top:82px;width:1px;height:19px;background:#6F7E9C"></div>
<div style="left:424px;top:81px;width:150px;height:20px;background:#fff;border:1px solid #E5E8F0"></div>
<svg class="i" style="left:564px;top:90px;" width="6" height="3"><use href="#dd"/></svg>
<span class="t" style="left:428px;top:82.5px;line-height:16px;height:16px;color:#111;letter-spacing:-0.210px;">TwinSAFEcursus_pretest</span>
<div style="left:580px;top:81px;width:150px;height:20px;background:#fff;border:1px solid #E5E8F0"></div>
<svg class="i" style="left:720px;top:90px;" width="6" height="3"><use href="#dd"/></svg>
<span class="t" style="left:584px;top:82.5px;line-height:16px;height:16px;color:#111;letter-spacing:-0.250px;">CX-1FAAFA</span>
<svg class="i" style="left:750px;top:83px;" width="3" height="17"><use href="#grip"/></svg>
<div style="left:760px;top:81px;width:148px;height:20px;background:#D6DBE9;border:1px solid #C4CBDB"></div>
<svg class="i" style="left:898px;top:90px;opacity:.7" width="6" height="3"><use href="#ddg"/></svg>
<div style="left:916px;top:81px;width:39px;height:20px;background:#D6DBE9;border:1px solid #C4CBDB"></div>
<svg class="i" style="left:945px;top:90px;opacity:.7" width="6" height="3"><use href="#ddg"/></svg>
<div style="left:962px;top:82px;width:1px;height:19px;background:#6F7E9C"></div>
<svg class="i" style="left:969px;top:83px;" width="16" height="16"><use href="#d_in"/></svg>
<svg class="i" style="left:990px;top:83px;" width="16" height="16"><use href="#d_play"/></svg>
<svg class="i" style="left:1012px;top:83px;" width="16" height="16"><use href="#d_stop"/></svg>
<svg class="i" style="left:1034px;top:83px;" width="16" height="16"><use href="#d_out"/></svg>
<div style="left:1057px;top:82px;width:1px;height:19px;background:#6F7E9C"></div>
<svg class="i" style="left:1065px;top:83px;" width="16" height="16"><use href="#s_into"/></svg>
<svg class="i" style="left:1087px;top:83px;" width="16" height="16"><use href="#s_over"/></svg>
<svg class="i" style="left:1109px;top:83px;" width="16" height="16"><use href="#s_out"/></svg>
<svg class="i" style="left:1130px;top:83px;" width="16" height="16"><use href="#s_lines"/></svg>
<svg class="i" style="left:1152px;top:83px;" width="16" height="16"><use href="#s_reset"/></svg>
<div style="left:1175px;top:82px;width:1px;height:19px;background:#6F7E9C"></div>
<svg class="i" style="left:1182px;top:83px;" width="16" height="16"><use href="#tray1"/></svg>
<svg class="i" style="left:1204px;top:83px;" width="16" height="16"><use href="#tray2"/></svg>
<svg class="i" style="left:1226px;top:83px;" width="16" height="16"><use href="#tray3"/></svg>
<div style="left:1249px;top:82px;width:1px;height:19px;background:#6F7E9C"></div>
<svg class="i" style="left:1256px;top:83px;" width="16" height="16"><use href="#loop1"/></svg>
<svg class="i" style="left:1278px;top:83px;" width="16" height="16"><use href="#loop1"/></svg>
<!-- dark frame -->
<div style="left:0px;top:103px;width:1920px;height:914px;background:#293955"></div>
<!-- solution explorer -->
<div style="left:6px;top:109px;width:418px;height:22px;background:#4D6082;border:1px solid #7E8DB0;border-bottom:none"></div>
<span class="t" style="left:11px;top:113px;line-height:16px;height:16px;color:#fff;letter-spacing:0.151px;">Solution Explorer</span>
<div style="left:375px;top:118px;width:8px;height:4px;"><svg width="8" height="4" viewBox="0 0 8 4"><path d="M0 0h8l-4 4z" fill="#F0F3F9"/></svg></div>
<div style="left:391px;top:114px;width:9px;height:12px;"><svg width="9" height="12" viewBox="0 0 9 12"><path d="M2.500 .5h4v6h-4zM5.500 .5v6M.5 6.500h8M4.500 6.500v5" fill="none" stroke="#F0F3F9" stroke-width="1"/></svg></div>
<div style="left:407px;top:115px;width:10px;height:10px;"><svg width="10" height="10" viewBox="0 0 10 10"><path d="M.5 .5l9 9M9.500 .5l-9 9" stroke="#F0F3F9" stroke-width="1.300"/></svg></div>
<div style="left:7px;top:131px;width:417px;height:29px;background:#CFD6E5"></div>
<svg class="i" style="left:14px;top:137px;" width="16" height="16"><use href="#navb"/></svg>
<svg class="i" style="left:36px;top:137px;" width="16" height="16"><use href="#navf"/></svg>
<div style="left:58px;top:136px;width:16px;height:16px;"><svg width="16" height="16" viewBox="0 0 16 16"><path d="M1.500 8.500l6.500-6.500 6.500 6.500M3.500 7.500v7h3.500v-4h2v4h3.500v-7" fill="none" stroke="#1E1E1E" stroke-width="1.300"/><path d="M11 3v2" stroke="#1E1E1E" stroke-width="1.300"/></svg></div>
<div style="left:81px;top:136px;width:17px;height:17px;"><svg width="17" height="17" viewBox="0 0 17 17"><path d="M6 1.500h4l1 1.500h4.500v8h-9.500z" fill="#DCB67A"/><rect x="1.500" y="6.500" width="8" height="7" fill="#E9EDF6" stroke="#1E1E1E" stroke-width="1.200"/><path d="M1.500 7.500h8" stroke="#1E1E1E" stroke-width="1.800"/><path d="M3 3.500h3M4.500 1.500l-2 2 2 2M14 13.500h-3M12.500 11.500l2 2-2 2" fill="none" stroke="#1A5FA8" stroke-width="1.100"/></svg></div>
<svg class="i" style="left:103px;top:144px;" width="6" height="3"><use href="#dd"/></svg>
<div style="left:115px;top:134px;width:1px;height:21px;background:#6F7E9C"></div>
<div style="left:125px;top:136px;width:17px;height:17px;"><svg width="17" height="17" viewBox="0 0 17 17"><circle cx="9" cy="10" r="5" fill="none" stroke="#1E1E1E" stroke-width="1.200"/><path d="M9 7v3.500h2.500M1 1.500h4M3 1.500v3" fill="none" stroke="#1E1E1E" stroke-width="1.100"/></svg></div>
<svg class="i" style="left:146px;top:144px;" width="6" height="3"><use href="#dd"/></svg>
<div style="left:160px;top:137px;width:14px;height:14px;"><svg width="14" height="14" viewBox="0 0 14 14"><path d="M5 2.500h8v7h-2M3 4.500h8v7h-2" fill="none" stroke="#1E1E1E" stroke-width="1"/><rect x="1.500" y="6.500" width="8" height="6.500" fill="#E9EDF6" stroke="#1E1E1E" stroke-width="1"/><path d="M3.500 9.500h4" stroke="#1A5FA8" stroke-width="1.200"/></svg></div>
<div style="left:180px;top:134px;width:1px;height:21px;background:#6F7E9C"></div>
<svg class="i" style="left:188px;top:137px;" width="16" height="16"><use href="#wrench"/></svg>
<div style="left:207px;top:133px;width:22px;height:24px;background:#FDFBF0;border:1px solid #2B3E5F"></div>
<div style="left:211px;top:141px;width:15px;height:6px;"><svg width="15" height="6" viewBox="0 0 15 6"><path d="M0 4.500h15" stroke="#1E1E1E" stroke-width="1.400"/><rect x="6" y="1" width="8" height="3.500" fill="#1E1E1E"/></svg></div>
<div style="left:8px;top:160px;width:415px;height:19px;background:#fff;border:1px solid #E5E8F0"></div>
<div style="left:7px;top:179px;width:417px;height:3px;background:#EEF0F7"></div>
<span class="t" style="left:12px;top:161.5px;line-height:16px;height:16px;color:#6D6D6D;letter-spacing:0.083px;">Search Solution Explorer (Ctrl+;)</span>
<div style="left:395px;top:163px;width:13px;height:13px;"><svg width="13" height="13" viewBox="0 0 13 13"><circle cx="8" cy="5" r="3.300" fill="none" stroke="#424242" stroke-width="1.500"/><path d="M5.500 7.500l-4.500 4.500" stroke="#424242" stroke-width="2"/></svg></div>
<svg class="i" style="left:413px;top:169px;opacity:.7" width="5" height="3"><use href="#dd"/></svg>
<div style="left:7px;top:182px;width:417px;height:808px;background:#fff"></div>
<div style="left:7px;top:181px;width:417px;height:1px;background:#E9ECF3"></div>
<div style="left:406px;top:182px;width:17px;height:808px;background:#E8E8EC"></div>
<div style="left:410px;top:190px;width:9px;height:5px;"><svg width="9" height="5" viewBox="0 0 9 5"><path d="M0 5l4.500-5 4.500 5z" fill="#868999"/></svg></div>
<div style="left:410px;top:977px;width:9px;height:5px;"><svg width="9" height="5" viewBox="0 0 9 5"><path d="M0 0l4.500 5 4.500-5z" fill="#868999"/></svg></div>
<div style="left:410px;top:391px;width:9px;height:523px;background:#C2C3C9"></div>
<div style="left:7px;top:182px;width:400px;height:808px;overflow:hidden">
<svg class="i" style="left:48px;top:4px;" width="16" height="16"><use href="#motion"/></svg>
<span class="t" style="left:69px;top:3.5px;line-height:16px;height:16px;color:#111;letter-spacing:-0.120px;">MOTION</span>
<svg class="i" style="left:48px;top:22px;" width="16" height="16"><use href="#plc"/></svg>
<span class="t" style="left:69px;top:21.5px;line-height:16px;height:16px;color:#111;letter-spacing:-0.838px;">PLC</span>
<svg class="i" style="left:28px;top:45px;" width="7" height="7"><use href="#expo"/></svg>
<svg class="i" style="left:48px;top:40px;" width="16" height="16"><use href="#safety"/></svg>
<span class="t" style="left:69px;top:39.5px;line-height:16px;height:16px;color:#111;letter-spacing:-1.207px;">SAFETY</span>
<svg class="i" style="left:46px;top:63px;" width="7" height="7"><use href="#expo"/></svg>
<svg class="i" style="left:66px;top:58px;" width="16" height="16"><use href="#safety2"/></svg>
<span class="t" style="left:87px;top:57.5px;line-height:16px;height:16px;color:#111;letter-spacing:-0.302px;">TwinSAFE_pretest</span>
<svg class="i" style="left:65px;top:79px;" width="6" height="10"><use href="#expc"/></svg>
<svg class="i" style="left:84px;top:76px;" width="16" height="16"><use href="#safeproj"/></svg>
<span class="t" style="left:105px;top:75.5px;line-height:16px;height:16px;color:#111;letter-spacing:-0.141px;">TwinSAFE_pretest Project</span>
<svg class="i" style="left:84px;top:94px;" width="16" height="16"><use href="#safeinst"/></svg>
<span class="t" style="left:105px;top:93.5px;line-height:16px;height:16px;color:#111;letter-spacing:-0.163px;">TwinSAFE_pretest Instance</span>
<svg class="i" style="left:48px;top:112px;" width="16" height="16"><use href="#cpp"/></svg>
<span class="t" style="left:69px;top:111.5px;line-height:16px;height:16px;color:#111;letter-spacing:0.425px;">C++</span>
<svg class="i" style="left:48px;top:130px;" width="16" height="16"><use href="#analytics"/></svg>
<span class="t" style="left:69px;top:129.5px;line-height:16px;height:16px;color:#111;letter-spacing:-0.383px;">ANALYTICS</span>
<svg class="i" style="left:28px;top:153px;" width="7" height="7"><use href="#expo"/></svg>
<svg class="i" style="left:48px;top:148px;" width="16" height="16"><use href="#io"/></svg>
<span class="t" style="left:69px;top:147.5px;line-height:16px;height:16px;color:#111;letter-spacing:0.578px;">I/O</span>
<svg class="i" style="left:46px;top:171px;" width="7" height="7"><use href="#expo"/></svg>
<svg class="i" style="left:66px;top:166px;" width="16" height="16"><use href="#devices"/></svg>
<span class="t" style="left:87px;top:165.5px;line-height:16px;height:16px;color:#111;letter-spacing:-0.168px;">Devices</span>
<svg class="i" style="left:64px;top:189px;" width="7" height="7"><use href="#expo"/></svg>
<svg class="i" style="left:84px;top:184px;" width="16" height="16"><use href="#ethercat"/></svg>
<span class="t" style="left:105px;top:183.5px;line-height:16px;height:16px;color:#111;letter-spacing:-0.157px;">Device 1 (EtherCAT)</span>
<svg class="i" style="left:102px;top:202px;" width="16" height="16"><use href="#image"/></svg>
<span class="t" style="left:123px;top:201.5px;line-height:16px;height:16px;color:#111;letter-spacing:0.258px;">Image</span>
<svg class="i" style="left:102px;top:220px;" width="16" height="16"><use href="#image"/></svg>
<span class="t" style="left:123px;top:219.5px;line-height:16px;height:16px;color:#111;letter-spacing:0.413px;">Image-Info</span>
<svg class="i" style="left:83px;top:241px;" width="6" height="10"><use href="#expc"/></svg>
<svg class="i" style="left:102px;top:238px;" width="16" height="16"><use href="#sync"/></svg>
<span class="t" style="left:123px;top:237.5px;line-height:16px;height:16px;color:#111;letter-spacing:-0.023px;">SyncUnits</span>
<svg class="i" style="left:83px;top:259px;" width="6" height="10"><use href="#expc"/></svg>
<svg class="i" style="left:102px;top:256px;" width="16" height="16"><use href="#vy"/></svg>
<span class="t" style="left:123px;top:255.5px;line-height:16px;height:16px;color:#111;letter-spacing:0.274px;">Inputs</span>
<svg class="i" style="left:83px;top:277px;" width="6" height="10"><use href="#expc"/></svg>
<svg class="i" style="left:102px;top:274px;" width="16" height="16"><use href="#vr"/></svg>
<span class="t" style="left:123px;top:273.5px;line-height:16px;height:16px;color:#111;letter-spacing:0.403px;">Outputs</span>
<svg class="i" style="left:83px;top:295px;" width="6" height="10"><use href="#expc"/></svg>
<svg class="i" style="left:102px;top:292px;" width="16" height="16"><use href="#vg"/></svg>
<span class="t" style="left:123px;top:291.5px;line-height:16px;height:16px;color:#111;letter-spacing:0.145px;">InfoData</span>
<svg class="i" style="left:82px;top:315px;" width="7" height="7"><use href="#expo"/></svg>
<svg class="i" style="left:102px;top:310px;" width="16" height="16"><use href="#ek"/></svg>
<span class="t" style="left:123px;top:309.5px;line-height:16px;height:16px;color:#111;letter-spacing:-0.324px;">Term 1 (EK1200)</span>
<svg class="i" style="left:100px;top:333px;" width="7" height="7"><use href="#expo"/></svg>
<svg class="i" style="left:120px;top:328px;" width="16" height="16"><use href="#termp"/></svg>
<span class="t" style="left:141px;top:327.5px;line-height:16px;height:16px;color:#111;letter-spacing:-0.290px;">Term 2 (EL6910)</span>
<svg class="i" style="left:119px;top:349px;" width="6" height="10"><use href="#expc"/></svg>
<svg class="i" style="left:138px;top:346px;" width="16" height="16"><use href="#vy"/></svg>
<span class="t" style="left:159px;top:345.5px;line-height:16px;height:16px;color:#111;letter-spacing:0.346px;">ConnectionInputs</span>
<svg class="i" style="left:119px;top:367px;" width="6" height="10"><use href="#expc"/></svg>
<svg class="i" style="left:138px;top:364px;" width="16" height="16"><use href="#vr"/></svg>
<span class="t" style="left:159px;top:363.5px;line-height:16px;height:16px;color:#111;letter-spacing:0.397px;">ConnectionOutputs</span>
<svg class="i" style="left:119px;top:385px;" width="6" height="10"><use href="#expc"/></svg>
<svg class="i" style="left:138px;top:382px;" width="16" height="16"><use href="#vr"/></svg>
<span class="t" style="left:159px;top:381.5px;line-height:16px;height:16px;color:#111;letter-spacing:0.196px;">StandardOutputs</span>
<svg class="i" style="left:119px;top:403px;" width="6" height="10"><use href="#expc"/></svg>
<svg class="i" style="left:138px;top:400px;" width="16" height="16"><use href="#vy"/></svg>
<span class="t" style="left:159px;top:399.5px;line-height:16px;height:16px;color:#111;letter-spacing:0.039px;">Device Info Data</span>
<svg class="i" style="left:119px;top:421px;" width="6" height="10"><use href="#expc"/></svg>
<svg class="i" style="left:138px;top:418px;" width="16" height="16"><use href="#vy"/></svg>
<span class="t" style="left:159px;top:417.5px;line-height:16px;height:16px;color:#111;letter-spacing:-0.255px;">FSLOGIC Inputs</span>
<svg class="i" style="left:138px;top:436px;" width="16" height="16"><use href="#vr"/></svg>
<span class="t" style="left:159px;top:435.5px;line-height:16px;height:16px;color:#111;letter-spacing:-0.154px;">FSLOGIC Outputs</span>
<svg class="i" style="left:119px;top:457px;" width="6" height="10"><use href="#expc"/></svg>
<svg class="i" style="left:138px;top:454px;" width="16" height="16"><use href="#vg"/></svg>
<span class="t" style="left:159px;top:453.5px;line-height:16px;height:16px;color:#111;letter-spacing:-0.078px;">WcState</span>
<svg class="i" style="left:119px;top:475px;" width="6" height="10"><use href="#expc"/></svg>
<svg class="i" style="left:138px;top:472px;" width="16" height="16"><use href="#vg"/></svg>
<span class="t" style="left:159px;top:471.5px;line-height:16px;height:16px;color:#111;letter-spacing:0.145px;">InfoData</span>
<svg class="i" style="left:100px;top:495px;" width="7" height="7"><use href="#expo"/></svg>
<svg class="i" style="left:120px;top:490px;" width="16" height="16"><use href="#termp"/></svg>
<span class="t" style="left:141px;top:489.5px;line-height:16px;height:16px;color:#111;letter-spacing:-0.290px;">Term 3 (EL1918)</span>
<svg class="i" style="left:119px;top:511px;" width="6" height="10"><use href="#expc"/></svg>
<svg class="i" style="left:138px;top:508px;" width="16" height="16"><use href="#termp"/></svg>
<span class="t" style="left:159px;top:507.5px;line-height:16px;height:16px;color:#111;letter-spacing:-0.149px;">Module 1 (FSOE)</span>
<svg class="i" style="left:119px;top:529px;" width="6" height="10"><use href="#expc"/></svg>
<svg class="i" style="left:138px;top:526px;" width="16" height="16"><use href="#termp"/></svg>
<span class="t" style="left:159px;top:525.5px;line-height:16px;height:16px;color:#111;letter-spacing:-0.121px;">Module 2 (FSLOGIC)</span>
<svg class="i" style="left:119px;top:547px;" width="6" height="10"><use href="#expc"/></svg>
<svg class="i" style="left:138px;top:544px;" width="16" height="16"><use href="#vg"/></svg>
<span class="t" style="left:159px;top:543.5px;line-height:16px;height:16px;color:#111;letter-spacing:-0.078px;">WcState</span>
<svg class="i" style="left:118px;top:567px;" width="7" height="7"><use href="#expo"/></svg>
<svg class="i" style="left:138px;top:562px;" width="16" height="16"><use href="#vg"/></svg>
<span class="t" style="left:159px;top:561.5px;line-height:16px;height:16px;color:#111;letter-spacing:0.145px;">InfoData</span>
<svg class="i" style="left:156px;top:580px;" width="16" height="16"><use href="#var"/></svg>
<span class="t" style="left:177px;top:579.5px;line-height:16px;height:16px;color:#111;letter-spacing:-0.215px;">State</span>
<svg class="i" style="left:137px;top:601px;" width="6" height="10"><use href="#expc"/></svg>
<svg class="i" style="left:156px;top:598px;" width="16" height="16"><use href="#vars"/></svg>
<span class="t" style="left:177px;top:597.5px;line-height:16px;height:16px;color:#111;letter-spacing:0.332px;">AdsAddr</span>
<div style="left:0px;top:614px;width:400px;height:19px;background:#CCCEDB"></div>
<svg class="i" style="left:100px;top:621px;" width="7" height="7"><use href="#expo"/></svg>
<svg class="i" style="left:120px;top:616px;" width="16" height="16"><use href="#termg"/></svg>
<span class="t" style="left:141px;top:615.5px;line-height:16px;height:16px;color:#111;letter-spacing:-0.245px;">Term 4 (EL3174-0090)</span>
<svg class="i" style="left:119px;top:637px;" width="6" height="10"><use href="#expc"/></svg>
<svg class="i" style="left:138px;top:634px;" width="16" height="16"><use href="#vy"/></svg>
<span class="t" style="left:159px;top:633.5px;line-height:16px;height:16px;color:#111;letter-spacing:0.002px;">AI Standard Channel 1</span>
<svg class="i" style="left:119px;top:655px;" width="6" height="10"><use href="#expc"/></svg>
<svg class="i" style="left:138px;top:652px;" width="16" height="16"><use href="#vy"/></svg>
<span class="t" style="left:159px;top:651.5px;line-height:16px;height:16px;color:#111;letter-spacing:0.032px;">AI Standard Channel 2</span>
<svg class="i" style="left:119px;top:673px;" width="6" height="10"><use href="#expc"/></svg>
<svg class="i" style="left:138px;top:670px;" width="16" height="16"><use href="#vy"/></svg>
<span class="t" style="left:159px;top:669.5px;line-height:16px;height:16px;color:#111;letter-spacing:0.032px;">AI Standard Channel 3</span>
<svg class="i" style="left:119px;top:691px;" width="6" height="10"><use href="#expc"/></svg>
<svg class="i" style="left:138px;top:688px;" width="16" height="16"><use href="#vy"/></svg>
<span class="t" style="left:159px;top:687.5px;line-height:16px;height:16px;color:#111;letter-spacing:0.032px;">AI Standard Channel 4</span>
<svg class="i" style="left:118px;top:711px;" width="7" height="7"><use href="#expo"/></svg>
<svg class="i" style="left:138px;top:706px;" width="16" height="16"><use href="#termg"/></svg>
<span class="t" style="left:159px;top:705.5px;line-height:16px;height:16px;color:#111;letter-spacing:-0.083px;">Module 1 (EL3174-0090)</span>
<svg class="i" style="left:137px;top:727px;" width="6" height="10"><use href="#expc"/></svg>
<svg class="i" style="left:156px;top:724px;" width="16" height="16"><use href="#vy"/></svg>
<span class="t" style="left:177px;top:723.5px;line-height:16px;height:16px;color:#111;letter-spacing:-0.181px;">TSC Inputs</span>
<svg class="i" style="left:137px;top:745px;" width="6" height="10"><use href="#expc"/></svg>
<svg class="i" style="left:156px;top:742px;" width="16" height="16"><use href="#vr"/></svg>
<span class="t" style="left:177px;top:741.5px;line-height:16px;height:16px;color:#111;letter-spacing:-0.047px;">TSC Outputs</span>
<svg class="i" style="left:119px;top:763px;" width="6" height="10"><use href="#expc"/></svg>
<svg class="i" style="left:138px;top:760px;" width="16" height="16"><use href="#vg"/></svg>
<span class="t" style="left:159px;top:759.5px;line-height:16px;height:16px;color:#111;letter-spacing:-0.078px;">WcState</span>
<svg class="i" style="left:119px;top:781px;" width="6" height="10"><use href="#expc"/></svg>
<svg class="i" style="left:138px;top:778px;" width="16" height="16"><use href="#vg"/></svg>
<span class="t" style="left:159px;top:777.5px;line-height:16px;height:16px;color:#111;letter-spacing:0.145px;">InfoData</span>
<svg class="i" style="left:101px;top:799px;" width="6" height="10"><use href="#expc"/></svg>
<svg class="i" style="left:120px;top:796px;" width="16" height="16"><use href="#termp"/></svg>
<span class="t" style="left:141px;top:795.5px;line-height:16px;height:16px;color:#111;letter-spacing:-0.297px;">Term 5 (EL2904)</span>
</div>
<div style="left:7px;top:990px;width:101px;height:20px;background:#fff"></div>
<span class="t" style="left:12px;top:992px;line-height:16px;height:16px;color:#111;letter-spacing:0.151px;">Solution Explorer</span>
<div style="left:108px;top:991px;width:86px;height:19px;background:#4D6082"></div>
<span class="t" style="left:114.5px;top:993px;line-height:16px;height:16px;color:#fff;letter-spacing:-0.053px;">Team Explorer</span>
<!-- document well -->
<div style="left:430px;top:109px;width:172px;height:20px;background:#FFF29D"></div>
<span class="t" style="left:434.7px;top:112px;line-height:16px;height:16px;color:#111;letter-spacing:-0.234px;">TwinSAFEcursus_pretest</span>
<div style="left:569px;top:116px;width:9px;height:7px;"><svg width="9" height="7" viewBox="0 0 9 7"><path d="M0 3.500h3.500M3.500 .5v6M3.500 1.500h4v3.500h-4M3.500 5.500h4.500" fill="none" stroke="#5E5838" stroke-width="1"/></svg></div>
<div style="left:587px;top:114px;width:10px;height:10px;"><svg width="10" height="10" viewBox="0 0 10 10"><path d="M.5 .5l9 9M9.500 .5l-9 9" stroke="#5E5838" stroke-width="1.300"/></svg></div>
<div style="left:430px;top:128px;width:1181px;height:3px;background:#FFF29D"></div>
<div style="left:1600px;top:118px;width:8px;height:4px;"><svg width="8" height="4" viewBox="0 0 8 4"><path d="M0 0h8l-4 4z" fill="#F0F3F9"/></svg></div>
<div style="left:431px;top:131px;width:1179px;height:545px;background:#F0F0F0"></div>
<div style="left:1610px;top:131px;width:1px;height:545px;background:#fff"></div>
<div style="left:431px;top:131px;width:1px;height:545px;background:#A0A0A0"></div>
<div style="left:432px;top:131px;width:1px;height:545px;background:#fff"></div>
<div style="left:432px;top:131px;width:1178px;height:1px;background:#8C8C8C"></div>
<div style="left:433px;top:132px;width:1177px;height:1px;background:#fff"></div>
<div style="left:440px;top:160px;width:1150px;height:382px;background:#fff;border:1px solid #DCDCDC"></div>
<div style="left:441px;top:142px;width:48px;height:18px;background:#F0F0F0;border:1px solid #DCDCDC;border-bottom:none"></div>
<span class="t ms" style="left:446.7px;top:144px;line-height:13px;height:13px;letter-spacing:-0.226px;">General</span>
<div style="left:489px;top:142px;width:58px;height:18px;background:#F0F0F0;border:1px solid #DCDCDC;border-bottom:none"></div>
<span class="t ms" style="left:496.2px;top:144px;line-height:13px;height:13px;letter-spacing:-0.084px;">EtherCAT</span>
<div style="left:547px;top:142px;width:42px;height:18px;background:#F0F0F0;border:1px solid #DCDCDC;border-bottom:none"></div>
<span class="t ms" style="left:554.2px;top:144px;line-height:13px;height:13px;letter-spacing:-1.315px;">DC</span>
<div style="left:589px;top:142px;width:76px;height:18px;background:#F0F0F0;border:1px solid #DCDCDC;border-bottom:none"></div>
<span class="t ms" style="left:596.3px;top:144px;line-height:13px;height:13px;letter-spacing:-0.121px;">Process Data</span>
<div style="left:665px;top:142px;width:42px;height:18px;background:#F0F0F0;border:1px solid #DCDCDC;border-bottom:none"></div>
<span class="t ms" style="left:672px;top:144px;line-height:13px;height:13px;letter-spacing:-0.283px;">Plc</span>
<div style="left:707px;top:142px;width:41px;height:18px;background:#F0F0F0;border:1px solid #DCDCDC;border-bottom:none"></div>
<span class="t ms" style="left:714.2px;top:144px;line-height:13px;height:13px;letter-spacing:-0.413px;">Slots</span>
<div style="left:747px;top:140px;width:51px;height:21px;background:#fff;border:1px solid #DCDCDC;border-bottom:none"></div>
<span class="t ms" style="left:756.3px;top:142px;line-height:13px;height:13px;letter-spacing:-0.290px;">Startup</span>
<div style="left:798px;top:142px;width:68px;height:18px;background:#F0F0F0;border:1px solid #DCDCDC;border-bottom:none"></div>
<span class="t ms" style="left:801.7px;top:144px;line-height:13px;height:13px;letter-spacing:-0.273px;">CoE - Online</span>
<div style="left:866px;top:142px;width:41px;height:18px;background:#F0F0F0;border:1px solid #DCDCDC;border-bottom:none"></div>
<span class="t ms" style="left:872.5px;top:144px;line-height:13px;height:13px;letter-spacing:-0.247px;">Online</span>
<div style="left:454px;top:172px;width:1124px;height:329px;background:#fff;border:1px solid #828790"></div>
<div style="left:521px;top:173px;width:1px;height:25px;background:#E5E5E5"></div>
<div style="left:587px;top:173px;width:1px;height:25px;background:#E5E5E5"></div>
<div style="left:663px;top:173px;width:1px;height:25px;background:#E5E5E5"></div>
<div style="left:811px;top:173px;width:1px;height:25px;background:#E5E5E5"></div>
<div style="left:959px;top:173px;width:1px;height:25px;background:#E5E5E5"></div>
<span class="t ms" style="left:462px;top:179px;line-height:13px;height:13px;">Transition</span>
<span class="t ms" style="left:528px;top:179px;line-height:13px;height:13px;">Protocol</span>
<span class="t ms" style="left:594px;top:179px;line-height:13px;height:13px;">Index</span>
<span class="t ms" style="left:670px;top:179px;line-height:13px;height:13px;">Data</span>
<span class="t ms" style="left:817px;top:179px;line-height:13px;height:13px;">Comment</span>
<div style="left:476px;top:198px;width:484px;height:17px;background:#EFEFEF"></div>
<div style="left:462px;top:200px;width:12px;height:12px;background:#C0C0C0"></div>
<span class="t" style="left:463.5px;top:197.5px;line-height:17px;height:17px;font-weight:bold;font-size:15px;color:#F00000;transform:scaleX(.8);transform-origin:0 0;">C</span>
<span class="t ms" style="left:478px;top:200px;line-height:13px;height:13px;">&lt;PS&gt;</span>
<span class="t ms" style="left:528px;top:200px;line-height:13px;height:13px;">CoE</span>
<span class="t ms" style="left:594px;top:200px;line-height:13px;height:13px;">0x1A08:04</span>
<span class="t ms" style="left:670px;top:200px;line-height:13px;height:13px;">0x6010:11, 16</span>
<span class="t ms" style="left:817px;top:200px;line-height:13px;height:13px;">download pdo 0x1A08 entry</span>
<div style="left:476px;top:215px;width:484px;height:17px;background:#D4EEEE"></div>
<div style="left:462px;top:217px;width:12px;height:12px;background:#C0C0C0"></div>
<span class="t" style="left:463.5px;top:214.5px;line-height:17px;height:17px;font-weight:bold;font-size:15px;color:#F00000;transform:scaleX(.8);transform-origin:0 0;">C</span>
<span class="t ms" style="left:478px;top:217px;line-height:13px;height:13px;">&lt;PS&gt;</span>
<span class="t ms" style="left:528px;top:217px;line-height:13px;height:13px;">CoE</span>
<span class="t ms" style="left:594px;top:217px;line-height:13px;height:13px;">0x1A08:05</span>
<span class="t ms" style="left:670px;top:217px;line-height:13px;height:13px;">0x6040:04, 16</span>
<span class="t ms" style="left:817px;top:217px;line-height:13px;height:13px;">download pdo 0x1A08 entry</span>
<div style="left:476px;top:232px;width:484px;height:17px;background:#EFEFEF"></div>
<div style="left:462px;top:234px;width:12px;height:12px;background:#C0C0C0"></div>
<span class="t" style="left:463.5px;top:231.5px;line-height:17px;height:17px;font-weight:bold;font-size:15px;color:#F00000;transform:scaleX(.8);transform-origin:0 0;">C</span>
<span class="t ms" style="left:478px;top:234px;line-height:13px;height:13px;">&lt;PS&gt;</span>
<span class="t ms" style="left:528px;top:234px;line-height:13px;height:13px;">CoE</span>
<span class="t ms" style="left:594px;top:234px;line-height:13px;height:13px;">0x1A08:06</span>
<span class="t ms" style="left:670px;top:234px;line-height:13px;height:13px;">0x6020:11, 16</span>
<span class="t ms" style="left:817px;top:234px;line-height:13px;height:13px;">download pdo 0x1A08 entry</span>
<div style="left:476px;top:249px;width:484px;height:17px;background:#D4EEEE"></div>
<div style="left:462px;top:251px;width:12px;height:12px;background:#C0C0C0"></div>
<span class="t" style="left:463.5px;top:248.5px;line-height:17px;height:17px;font-weight:bold;font-size:15px;color:#F00000;transform:scaleX(.8);transform-origin:0 0;">C</span>
<span class="t ms" style="left:478px;top:251px;line-height:13px;height:13px;">&lt;PS&gt;</span>
<span class="t ms" style="left:528px;top:251px;line-height:13px;height:13px;">CoE</span>
<span class="t ms" style="left:594px;top:251px;line-height:13px;height:13px;">0x1A08:07</span>
<span class="t ms" style="left:670px;top:251px;line-height:13px;height:13px;">0x6040:05, 16</span>
<span class="t ms" style="left:817px;top:251px;line-height:13px;height:13px;">download pdo 0x1A08 entry</span>
<div style="left:476px;top:266px;width:484px;height:17px;background:#EFEFEF"></div>
<div style="left:462px;top:268px;width:12px;height:12px;background:#C0C0C0"></div>
<span class="t" style="left:463.5px;top:265.5px;line-height:17px;height:17px;font-weight:bold;font-size:15px;color:#F00000;transform:scaleX(.8);transform-origin:0 0;">C</span>
<span class="t ms" style="left:478px;top:268px;line-height:13px;height:13px;">&lt;PS&gt;</span>
<span class="t ms" style="left:528px;top:268px;line-height:13px;height:13px;">CoE</span>
<span class="t ms" style="left:594px;top:268px;line-height:13px;height:13px;">0x1A08:08</span>
<span class="t ms" style="left:670px;top:268px;line-height:13px;height:13px;">0x6030:11, 16</span>
<span class="t ms" style="left:817px;top:268px;line-height:13px;height:13px;">download pdo 0x1A08 entry</span>
<div style="left:476px;top:283px;width:484px;height:17px;background:#D4EEEE"></div>
<div style="left:462px;top:285px;width:12px;height:12px;background:#C0C0C0"></div>
<span class="t" style="left:463.5px;top:282.5px;line-height:17px;height:17px;font-weight:bold;font-size:15px;color:#F00000;transform:scaleX(.8);transform-origin:0 0;">C</span>
<span class="t ms" style="left:478px;top:285px;line-height:13px;height:13px;">&lt;PS&gt;</span>
<span class="t ms" style="left:528px;top:285px;line-height:13px;height:13px;">CoE</span>
<span class="t ms" style="left:594px;top:285px;line-height:13px;height:13px;">0x1A08:09</span>
<span class="t ms" style="left:670px;top:285px;line-height:13px;height:13px;">0x6040:06, 16</span>
<span class="t ms" style="left:817px;top:285px;line-height:13px;height:13px;">download pdo 0x1A08 entry</span>
<div style="left:476px;top:300px;width:484px;height:17px;background:#EFEFEF"></div>
<div style="left:462px;top:302px;width:12px;height:12px;background:#C0C0C0"></div>
<span class="t" style="left:463.5px;top:299.5px;line-height:17px;height:17px;font-weight:bold;font-size:15px;color:#F00000;transform:scaleX(.8);transform-origin:0 0;">C</span>
<span class="t ms" style="left:478px;top:302px;line-height:13px;height:13px;">&lt;PS&gt;</span>
<span class="t ms" style="left:528px;top:302px;line-height:13px;height:13px;">CoE</span>
<span class="t ms" style="left:594px;top:302px;line-height:13px;height:13px;">0x1A08:0A</span>
<span class="t ms" style="left:670px;top:302px;line-height:13px;height:13px;">0x6040:02, 16</span>
<span class="t ms" style="left:817px;top:302px;line-height:13px;height:13px;">download pdo 0x1A08 entry</span>
<div style="left:476px;top:317px;width:484px;height:17px;background:#D4EEEE"></div>
<div style="left:462px;top:319px;width:12px;height:12px;background:#C0C0C0"></div>
<span class="t" style="left:463.5px;top:316.5px;line-height:17px;height:17px;font-weight:bold;font-size:15px;color:#F00000;transform:scaleX(.8);transform-origin:0 0;">C</span>
<span class="t ms" style="left:478px;top:319px;line-height:13px;height:13px;">&lt;PS&gt;</span>
<span class="t ms" style="left:528px;top:319px;line-height:13px;height:13px;">CoE</span>
<span class="t ms" style="left:594px;top:319px;line-height:13px;height:13px;">0x1A08:00</span>
<span class="t ms" style="left:670px;top:319px;line-height:13px;height:13px;">0x776F:64, 10</span>
<span class="t ms" style="left:817px;top:319px;line-height:13px;height:13px;">download pdo 0x1A08 entr...</span>
<div style="left:476px;top:334px;width:484px;height:17px;background:#EFEFEF"></div>
<div style="left:462px;top:336px;width:12px;height:12px;background:#C0C0C0"></div>
<span class="t" style="left:463.5px;top:333.5px;line-height:17px;height:17px;font-weight:bold;font-size:15px;color:#F00000;transform:scaleX(.8);transform-origin:0 0;">C</span>
<span class="t ms" style="left:478px;top:336px;line-height:13px;height:13px;">&lt;PS&gt;</span>
<span class="t ms" style="left:528px;top:336px;line-height:13px;height:13px;">CoE</span>
<span class="t ms" style="left:594px;top:336px;line-height:13px;height:13px;">0x1C12:01</span>
<span class="t ms" style="left:670px;top:336px;line-height:13px;height:13px;">0x1600 (5632)</span>
<span class="t ms" style="left:817px;top:336px;line-height:13px;height:13px;">download pdo 0x1C12:01 i...</span>
<div style="left:476px;top:351px;width:484px;height:17px;background:#D4EEEE"></div>
<div style="left:462px;top:353px;width:12px;height:12px;background:#C0C0C0"></div>
<span class="t" style="left:463.5px;top:350.5px;line-height:17px;height:17px;font-weight:bold;font-size:15px;color:#F00000;transform:scaleX(.8);transform-origin:0 0;">C</span>
<span class="t ms" style="left:478px;top:353px;line-height:13px;height:13px;">&lt;PS&gt;</span>
<span class="t ms" style="left:528px;top:353px;line-height:13px;height:13px;">CoE</span>
<span class="t ms" style="left:594px;top:353px;line-height:13px;height:13px;">0x1C12:00</span>
<span class="t ms" style="left:670px;top:353px;line-height:13px;height:13px;">0x01 (1)</span>
<span class="t ms" style="left:817px;top:353px;line-height:13px;height:13px;">download pdo 0x1C12 count</span>
<div style="left:476px;top:368px;width:484px;height:17px;background:#EFEFEF"></div>
<div style="left:462px;top:370px;width:12px;height:12px;background:#C0C0C0"></div>
<span class="t" style="left:463.5px;top:367.5px;line-height:17px;height:17px;font-weight:bold;font-size:15px;color:#F00000;transform:scaleX(.8);transform-origin:0 0;">C</span>
<span class="t ms" style="left:478px;top:370px;line-height:13px;height:13px;">&lt;PS&gt;</span>
<span class="t ms" style="left:528px;top:370px;line-height:13px;height:13px;">CoE</span>
<span class="t ms" style="left:594px;top:370px;line-height:13px;height:13px;">0x1C13:01</span>
<span class="t ms" style="left:670px;top:370px;line-height:13px;height:13px;">0x1A00 (6656)</span>
<span class="t ms" style="left:817px;top:370px;line-height:13px;height:13px;">download pdo 0x1C13:01 i...</span>
<div style="left:476px;top:385px;width:484px;height:17px;background:#D4EEEE"></div>
<div style="left:462px;top:387px;width:12px;height:12px;background:#C0C0C0"></div>
<span class="t" style="left:463.5px;top:384.5px;line-height:17px;height:17px;font-weight:bold;font-size:15px;color:#F00000;transform:scaleX(.8);transform-origin:0 0;">C</span>
<span class="t ms" style="left:478px;top:387px;line-height:13px;height:13px;">&lt;PS&gt;</span>
<span class="t ms" style="left:528px;top:387px;line-height:13px;height:13px;">CoE</span>
<span class="t ms" style="left:594px;top:387px;line-height:13px;height:13px;">0x1C13:02</span>
<span class="t ms" style="left:670px;top:387px;line-height:13px;height:13px;">0x1A02 (6658)</span>
<span class="t ms" style="left:817px;top:387px;line-height:13px;height:13px;">download pdo 0x1C13:02 i...</span>
<div style="left:476px;top:402px;width:484px;height:17px;background:#EFEFEF"></div>
<div style="left:462px;top:404px;width:12px;height:12px;background:#C0C0C0"></div>
<span class="t" style="left:463.5px;top:401.5px;line-height:17px;height:17px;font-weight:bold;font-size:15px;color:#F00000;transform:scaleX(.8);transform-origin:0 0;">C</span>
<span class="t ms" style="left:478px;top:404px;line-height:13px;height:13px;">&lt;PS&gt;</span>
<span class="t ms" style="left:528px;top:404px;line-height:13px;height:13px;">CoE</span>
<span class="t ms" style="left:594px;top:404px;line-height:13px;height:13px;">0x1C13:03</span>
<span class="t ms" style="left:670px;top:404px;line-height:13px;height:13px;">0x1A04 (6660)</span>
<span class="t ms" style="left:817px;top:404px;line-height:13px;height:13px;">download pdo 0x1C13:03 i...</span>
<div style="left:476px;top:419px;width:484px;height:17px;background:#D4EEEE"></div>
<div style="left:462px;top:421px;width:12px;height:12px;background:#C0C0C0"></div>
<span class="t" style="left:463.5px;top:418.5px;line-height:17px;height:17px;font-weight:bold;font-size:15px;color:#F00000;transform:scaleX(.8);transform-origin:0 0;">C</span>
<span class="t ms" style="left:478px;top:421px;line-height:13px;height:13px;">&lt;PS&gt;</span>
<span class="t ms" style="left:528px;top:421px;line-height:13px;height:13px;">CoE</span>
<span class="t ms" style="left:594px;top:421px;line-height:13px;height:13px;">0x1C13:04</span>
<span class="t ms" style="left:670px;top:421px;line-height:13px;height:13px;">0x1A06 (6662)</span>
<span class="t ms" style="left:817px;top:421px;line-height:13px;height:13px;">download pdo 0x1C13:04 i...</span>
<div style="left:476px;top:436px;width:484px;height:17px;background:#EFEFEF"></div>
<div style="left:462px;top:438px;width:12px;height:12px;background:#C0C0C0"></div>
<span class="t" style="left:463.5px;top:435.5px;line-height:17px;height:17px;font-weight:bold;font-size:15px;color:#F00000;transform:scaleX(.8);transform-origin:0 0;">C</span>
<span class="t ms" style="left:478px;top:438px;line-height:13px;height:13px;">&lt;PS&gt;</span>
<span class="t ms" style="left:528px;top:438px;line-height:13px;height:13px;">CoE</span>
<span class="t ms" style="left:594px;top:438px;line-height:13px;height:13px;">0x1C13:05</span>
<span class="t ms" style="left:670px;top:438px;line-height:13px;height:13px;">0x1A08 (6664)</span>
<span class="t ms" style="left:817px;top:438px;line-height:13px;height:13px;">download pdo 0x1C13:05 i...</span>
<div style="left:476px;top:453px;width:484px;height:17px;background:#D4EEEE"></div>
<div style="left:462px;top:455px;width:12px;height:12px;background:#C0C0C0"></div>
<span class="t" style="left:463.5px;top:452.5px;line-height:17px;height:17px;font-weight:bold;font-size:15px;color:#F00000;transform:scaleX(.8);transform-origin:0 0;">C</span>
<span class="t ms" style="left:478px;top:455px;line-height:13px;height:13px;">&lt;PS&gt;</span>
<span class="t ms" style="left:528px;top:455px;line-height:13px;height:13px;">CoE</span>
<span class="t ms" style="left:594px;top:455px;line-height:13px;height:13px;">0x1C13:00</span>
<span class="t ms" style="left:670px;top:455px;line-height:13px;height:13px;">0x05 (5)</span>
<span class="t ms" style="left:817px;top:455px;line-height:13px;height:13px;">download pdo 0x1C13 count</span>
<div style="left:476px;top:470px;width:484px;height:17px;background:#0078D7"></div>
<div style="left:462px;top:472px;width:12px;height:12px;background:#1A98E8"></div>
<span class="t" style="left:463.5px;top:469.5px;line-height:17px;height:17px;font-weight:bold;font-size:15px;color:#7A1030;transform:scaleX(.8);transform-origin:0 0;">C</span>
<span class="t ms" style="left:478px;top:472px;line-height:13px;height:13px;color:#fff;">PS</span>
<span class="t ms" style="left:528px;top:472px;line-height:13px;height:13px;color:#fff;">CoE</span>
<span class="t ms" style="left:594px;top:472px;line-height:13px;height:13px;color:#fff;">0x8040:00</span>
<span class="t ms" style="left:670px;top:472px;line-height:13px;height:13px;color:#fff;">0x02 (2)</span>
<div style="left:1560px;top:173px;width:17px;height:327px;background:#F0F0F0"></div>
<div style="left:1560px;top:267px;width:15px;height:215px;background:#CDCDCD"></div>
<div style="left:1563px;top:179px;width:9px;height:6px;"><svg width="9" height="6" viewBox="0 0 9 6"><path d="M1.200 5l3.300-3.300 3.300 3.300" fill="none" stroke="#505050" stroke-width="2"/></svg></div>
<div style="left:1563px;top:487px;width:9px;height:6px;"><svg width="9" height="6" viewBox="0 0 9 6"><path d="M1.200 1l3.300 3.300 3.300-3.300" fill="none" stroke="#505050" stroke-width="2"/></svg></div>
<div style="left:455px;top:514px;width:69px;height:18px;background:#CCCCCC;border:1px solid #BFBFBF"></div>
<span class="t ms" style="left:454px;top:516px;width:69px;text-align:center;line-height:13px;color:#838383;transform-origin:50% 50%">Move Up</span>
<div style="left:539px;top:514px;width:69px;height:18px;background:#CCCCCC;border:1px solid #BFBFBF"></div>
<span class="t ms" style="left:538px;top:516px;width:69px;text-align:center;line-height:13px;color:#838383;transform-origin:50% 50%">Move Down</span>
<div style="left:1343px;top:514px;width:69px;height:18px;background:#E1E1E1;border:1px solid #ADADAD"></div>
<span class="t ms" style="left:1343px;top:516px;width:69px;text-align:center;line-height:13px;transform-origin:50% 50%">New...</span>
<div style="left:1426px;top:514px;width:69px;height:18px;background:#E1E1E1;border:1px solid #ADADAD"></div>
<span class="t ms" style="left:1426px;top:516px;width:69px;text-align:center;line-height:13px;transform-origin:50% 50%">Delete...</span>
<div style="left:1508px;top:514px;width:69px;height:18px;background:#E1E1E1;border:1px solid #ADADAD"></div>
<span class="t ms" style="left:1508px;top:516px;width:69px;text-align:center;line-height:13px;transform-origin:50% 50%">Edit...</span>
<div style="left:432px;top:542px;width:1178px;height:6px;background:#F0F0F0"></div>
<div style="left:432px;top:547px;width:1178px;height:2px;background:#696969"></div>
<div style="left:432px;top:549px;width:1178px;height:126px;background:#fff"></div>
<div style="left:552px;top:550px;width:1px;height:23px;background:#E5E5E5"></div>
<div style="left:572px;top:550px;width:1px;height:23px;background:#E5E5E5"></div>
<div style="left:692px;top:550px;width:1px;height:23px;background:#E5E5E5"></div>
<div style="left:772px;top:550px;width:1px;height:23px;background:#E5E5E5"></div>
<div style="left:1130px;top:550px;width:1px;height:23px;background:#E5E5E5"></div>
<span class="t" style="left:439px;top:553px;line-height:16px;height:16px;color:#111;letter-spacing:0.438px;">Name</span>
<span class="t" style="left:579px;top:553px;line-height:16px;height:16px;color:#111;letter-spacing:0.310px;">Online</span>
<span class="t" style="left:699px;top:553px;line-height:16px;height:16px;color:#111;letter-spacing:-0.446px;">Type</span>
<span class="t" style="left:779px;top:553px;line-height:16px;height:16px;color:#111;letter-spacing:-0.125px;">Size</span>
<div style="left:432px;top:573px;width:1160px;height:102px;overflow:hidden">
<svg class="i" style="left:4px;top:1px;" width="16" height="16"><use href="#vars"/></svg>
<span class="t" style="left:23px;top:2px;line-height:16px;height:16px;color:#111;letter-spacing:-0.202px;">Status</span>
<span class="t" style="left:147px;top:2px;line-height:16px;height:16px;color:#111;letter-spacing:-0.351px;">0x8000 (32768)</span>
<span class="t" style="left:267px;top:2px;line-height:16px;height:16px;color:#111;letter-spacing:-0.382px;">Status_891...</span>
<span class="t" style="left:347px;top:2px;line-height:16px;height:16px;color:#111;">2.0</span>
<svg class="i" style="left:4px;top:20px;" width="16" height="16"><use href="#var"/></svg>
<span class="t" style="left:23px;top:21px;line-height:16px;height:16px;color:#111;letter-spacing:-0.166px;">Value</span>
<span class="t" style="left:147px;top:21px;line-height:16px;height:16px;color:#111;letter-spacing:-1.094px;">261</span>
<span class="t" style="left:267px;top:21px;line-height:16px;height:16px;color:#111;letter-spacing:-0.266px;">INT</span>
<span class="t" style="left:347px;top:21px;line-height:16px;height:16px;color:#111;">2.0</span>
<svg class="i" style="left:4px;top:39px;" width="16" height="16"><use href="#vars"/></svg>
<span class="t" style="left:23px;top:40px;line-height:16px;height:16px;color:#111;letter-spacing:-0.202px;">Status</span>
<span class="t" style="left:147px;top:40px;line-height:16px;height:16px;color:#111;letter-spacing:-0.351px;">0x8000 (32768)</span>
<span class="t" style="left:267px;top:40px;line-height:16px;height:16px;color:#111;letter-spacing:-0.382px;">Status_891...</span>
<span class="t" style="left:347px;top:40px;line-height:16px;height:16px;color:#111;">2.0</span>
<svg class="i" style="left:4px;top:58px;" width="16" height="16"><use href="#var"/></svg>
<span class="t" style="left:23px;top:59px;line-height:16px;height:16px;color:#111;letter-spacing:-0.166px;">Value</span>
<span class="t" style="left:147px;top:59px;line-height:16px;height:16px;color:#111;letter-spacing:0.166px;">-4</span>
<span class="t" style="left:267px;top:59px;line-height:16px;height:16px;color:#111;letter-spacing:-0.266px;">INT</span>
<span class="t" style="left:347px;top:59px;line-height:16px;height:16px;color:#111;">2.0</span>
<svg class="i" style="left:4px;top:77px;" width="16" height="16"><use href="#vars"/></svg>
<span class="t" style="left:23px;top:78px;line-height:16px;height:16px;color:#111;letter-spacing:-0.202px;">Status</span>
<span class="t" style="left:147px;top:78px;line-height:16px;height:16px;color:#111;letter-spacing:-0.351px;">0x8000 (32768)</span>
<span class="t" style="left:267px;top:78px;line-height:16px;height:16px;color:#111;letter-spacing:-0.382px;">Status_891...</span>
<span class="t" style="left:347px;top:78px;line-height:16px;height:16px;color:#111;">2.0</span>
<svg class="i" style="left:4px;top:96px;" width="16" height="16"><use href="#var"/></svg>
<span class="t" style="left:23px;top:97px;line-height:16px;height:16px;color:#111;letter-spacing:-0.166px;">Value</span>
<span class="t" style="left:147px;top:97px;line-height:16px;height:16px;color:#111;">0</span>
<span class="t" style="left:267px;top:97px;line-height:16px;height:16px;color:#111;letter-spacing:-0.266px;">INT</span>
<span class="t" style="left:347px;top:97px;line-height:16px;height:16px;color:#111;">2.0</span>
</div>
<div style="left:1592px;top:549px;width:17px;height:126px;background:#F0F0F0"></div>
<div style="left:1593px;top:566px;width:15px;height:33px;background:#CDCDCD"></div>
<div style="left:1596px;top:555px;width:9px;height:6px;"><svg width="9" height="6" viewBox="0 0 9 6"><path d="M1.200 5l3.300-3.300 3.300 3.300" fill="none" stroke="#505050" stroke-width="2"/></svg></div>
<div style="left:1596px;top:663px;width:9px;height:6px;"><svg width="9" height="6" viewBox="0 0 9 6"><path d="M1.200 1l3.300 3.300 3.300-3.300" fill="none" stroke="#505050" stroke-width="2"/></svg></div>
<div style="left:432px;top:675px;width:1178px;height:1px;background:#fff"></div>
<!-- error list -->
<div style="left:431px;top:684px;width:1179px;height:21px;background:#4D6082;border:1px solid #7E8DB0;border-bottom:none"></div>
<span class="t" style="left:435px;top:687px;line-height:16px;height:16px;color:#fff;">Error List</span>
<div style="left:1562px;top:692px;width:8px;height:4px;"><svg width="8" height="4" viewBox="0 0 8 4"><path d="M0 0h8l-4 4z" fill="#F0F3F9"/></svg></div>
<div style="left:1578px;top:688px;width:9px;height:12px;"><svg width="9" height="12" viewBox="0 0 9 12"><path d="M2.500 .5h4v6h-4zM5.500 .5v6M.5 6.500h8M4.500 6.500v5" fill="none" stroke="#F0F3F9" stroke-width="1"/></svg></div>
<div style="left:1594px;top:689px;width:10px;height:10px;"><svg width="10" height="10" viewBox="0 0 10 10"><path d="M.5 .5l9 9M9.500 .5l-9 9" stroke="#F0F3F9" stroke-width="1.300"/></svg></div>
<div style="left:431px;top:705px;width:1179px;height:26px;background:#CFD6E5"></div>
<div style="left:431px;top:731px;width:1179px;height:259px;background:#fff"></div>
<div style="left:438px;top:708px;width:150px;height:20px;background:#fff;border:1px solid #E5E8F0"></div>
<svg class="i" style="left:577px;top:716px;" width="6" height="3"><use href="#dd"/></svg>
<div style="left:594px;top:708px;width:1px;height:20px;background:#6F7E9C"></div>
<div style="left:602px;top:710px;width:15px;height:15px;"><svg width="15" height="15" viewBox="0 0 15 15"><circle cx="7.500" cy="7.500" r="7" fill="#E41400"/><path d="M4.500 4.500l6 6M10.500 4.500l-6 6" stroke="#fff" stroke-width="1.800"/></svg></div>
<span class="t" style="left:622px;top:710px;line-height:16px;height:16px;color:#1E1E1E;">Errors</span>
<div style="left:663px;top:708px;width:1px;height:20px;background:#6F7E9C"></div>
<div style="left:671px;top:710px;width:16px;height:15px;"><svg width="16" height="15" viewBox="0 0 16 15"><path d="M8 .8l7.300 13.400h-14.600z" fill="#FFCC00" stroke="#E0B000" stroke-width=".6"/><path d="M8 5v5" stroke="#1E1E1E" stroke-width="1.700"/><circle cx="8" cy="12" r="1" fill="#1E1E1E"/></svg></div>
<span class="t" style="left:691px;top:710px;line-height:16px;height:16px;color:#1E1E1E;">Warnings</span>
<div style="left:752px;top:708px;width:1px;height:20px;background:#6F7E9C"></div>
<div style="left:760px;top:710px;width:15px;height:15px;"><svg width="15" height="15" viewBox="0 0 15 15"><circle cx="7.500" cy="7.500" r="7" fill="#1BA1E2"/><path d="M7.500 6.500v5" stroke="#fff" stroke-width="1.900"/><circle cx="7.500" cy="4" r="1.100" fill="#fff"/></svg></div>
<span class="t" style="left:780px;top:710px;line-height:16px;height:16px;color:#1E1E1E;">Messages</span>
<div style="left:842px;top:708px;width:1px;height:20px;background:#6F7E9C"></div>
<div style="left:851px;top:712px;width:12px;height:12px;"><svg width="12" height="12" viewBox="0 0 12 12"><path d="M1 1l10 10M11 1l-10 10" stroke="#A7ADBA" stroke-width="1.800"/></svg></div>
<span class="t" style="left:872px;top:710px;line-height:16px;height:16px;color:#9098A8;">Clear</span>
<div style="left:910px;top:708px;width:1px;height:20px;background:#6F7E9C"></div>
<div style="left:918px;top:708px;width:150px;height:20px;background:#fff;border:1px solid #E5E8F0"></div>
<svg class="i" style="left:1057px;top:716px;" width="6" height="3"><use href="#dd"/></svg>
<div style="left:1410px;top:707px;width:199px;height:22px;background:#fff;border:1px solid #E5E8F0"></div>
<span class="t" style="left:1415px;top:710px;line-height:16px;height:16px;color:#6D6D6D;">Search Error List</span>
<div style="left:1582px;top:711px;width:13px;height:13px;"><svg width="13" height="13" viewBox="0 0 13 13"><circle cx="8" cy="5" r="3.300" fill="none" stroke="#424242" stroke-width="1.500"/><path d="M5.500 7.500l-4.500 4.500" stroke="#424242" stroke-width="2"/></svg></div>
<svg class="i" style="left:1600px;top:716px;opacity:.7" width="5" height="3"><use href="#dd"/></svg>
<div style="left:431px;top:990px;width:56px;height:20px;background:#fff"></div>
<span class="t" style="left:436px;top:992px;line-height:16px;height:16px;color:#1E1E1E;">Error List</span>
<div style="left:488px;top:991px;width:50px;height:19px;background:#4D6082"></div>
<span class="t" style="left:494.5px;top:993px;line-height:16px;height:16px;color:#fff;letter-spacing:0.494px;">Output</span>
<!-- properties -->
<div style="left:1617px;top:109px;width:297px;height:22px;background:#4D6082;border:1px solid #7E8DB0;border-bottom:none"></div>
<span class="t" style="left:1622px;top:113px;line-height:16px;height:16px;color:#fff;">Properties</span>
<div style="left:1865px;top:118px;width:8px;height:4px;"><svg width="8" height="4" viewBox="0 0 8 4"><path d="M0 0h8l-4 4z" fill="#F0F3F9"/></svg></div>
<div style="left:1881px;top:114px;width:9px;height:12px;"><svg width="9" height="12" viewBox="0 0 9 12"><path d="M2.500 .5h4v6h-4zM5.500 .5v6M.5 6.500h8M4.500 6.500v5" fill="none" stroke="#F0F3F9" stroke-width="1"/></svg></div>
<div style="left:1897px;top:115px;width:10px;height:10px;"><svg width="10" height="10" viewBox="0 0 10 10"><path d="M.5 .5l9 9M9.500 .5l-9 9" stroke="#F0F3F9" stroke-width="1.300"/></svg></div>
<div style="left:1618px;top:131px;width:295px;height:860px;background:#fff"></div>
<div style="left:1617px;top:131px;width:1px;height:860px;background:#4D6082"></div>
<div style="left:1913px;top:131px;width:1px;height:860px;background:#4D6082"></div>
<span class="t" style="left:1624.4px;top:135px;line-height:16px;height:16px;font-weight:bold;-webkit-text-stroke:0;color:#1E1E1E;letter-spacing:0.252px;">Term 4 (EL3174-0090)</span>
<span class="t" style="left:1754px;top:135px;line-height:16px;height:16px;color:#1E1E1E;letter-spacing:-0.182px;">EL3174-0090 4Ch. Ana. Inpu</span>
<svg class="i" style="left:1903px;top:141px;" width="6" height="3"><use href="#dd"/></svg>
<div style="left:1619px;top:155px;width:293px;height:26px;background:#CFD6E5"></div>
<div style="left:1620px;top:157px;width:23px;height:23px;background:#FDFDFD;border:1px solid #2B3E5F"></div>
<div style="left:1624px;top:161px;width:15px;height:15px;"><svg width="15" height="15" viewBox="0 0 15 15"><path d="M1 1.500h4v4h-4zM1 9.500h4v4h-4z" fill="none" stroke="#1E1E1E" stroke-width="1"/><path d="M2 3.500h2M2 11.500h2M3 10.500v2" stroke="#1E1E1E" stroke-width="1"/><path d="M7 1.500h7M8 3.500h6M8 5.500h5M7 9.500h7M8 11.500h6M8 13.500h4" stroke="#1E1E1E" stroke-width="1"/></svg></div>
<div style="left:1647px;top:161px;width:16px;height:16px;"><svg width="16" height="16" viewBox="0 0 16 16"><rect x="1" y="0" width="7" height="7" fill="#555"/><path d="M3 6l1.500-4.500 1.500 4.500M3.500 4.500h2" fill="none" stroke="#fff" stroke-width=".9"/><path d="M2 9.500h5l-5 5h5" fill="none" stroke="#1E1E1E" stroke-width="1.300"/><path d="M12 2v10M9.500 9.500l2.500 3 2.500-3" fill="none" stroke="#0E57B5" stroke-width="1.500"/></svg></div>
<div style="left:1670px;top:159px;width:1px;height:19px;background:#6F7E9C"></div>
<svg class="i" style="left:1676px;top:161px;" width="16" height="16"><use href="#wrenchg"/></svg>
<div style="left:1619px;top:181px;width:14px;height:135px;background:#EEEEF2"></div>
<div style="left:1761px;top:181px;width:1px;height:135px;background:#EEEEF2"></div>
<div style="left:1619px;top:181px;width:294px;height:21px;background:#EEEEF2"></div>
<div style="left:1621px;top:187px;width:9px;height:9px;"><svg width="9" height="9" viewBox="0 0 9 9"><rect x=".5" y=".5" width="8" height="8" fill="#fff" stroke="#1E1E1E"/><path d="M2.500 4.500h4" stroke="#1E1E1E"/></svg></div>
<span class="t" style="left:1637px;top:183.5px;line-height:16px;height:16px;font-weight:bold;-webkit-text-stroke:0;color:#1E1E1E;">Misc</span>
<div style="left:1633px;top:202px;width:128px;height:19px;background:#fff;border-bottom:1px solid #F0F0F5"></div>
<div style="left:1762px;top:202px;width:150px;height:19px;background:#fff;border-bottom:1px solid #F0F0F5"></div>
<span class="t" style="left:1637px;top:202.5px;line-height:16px;height:16px;color:#1E1E1E;">(Name)</span>
<div style="left:1765px;top:202px;width:147px;height:19px;overflow:hidden"><span class="t" style="left:0.5px;top:0.5px;line-height:16px;color:#1E1E1E;font-weight:bold;-webkit-text-stroke:0;letter-spacing:0.252px;">Term 4 (EL3174-0090)</span></div>
<div style="left:1633px;top:221px;width:128px;height:19px;background:#fff;border-bottom:1px solid #F0F0F5"></div>
<div style="left:1762px;top:221px;width:150px;height:19px;background:#fff;border-bottom:1px solid #F0F0F5"></div>
<span class="t" style="left:1637px;top:221.5px;line-height:16px;height:16px;color:#1E1E1E;">Disabled</span>
<div style="left:1765px;top:221px;width:147px;height:19px;overflow:hidden"><span class="t" style="left:0.5px;top:0.5px;line-height:16px;color:#1E1E1E;font-weight:bold;-webkit-text-stroke:0;letter-spacing:-0.422px;">Enabled</span></div>
<div style="left:1633px;top:240px;width:128px;height:19px;background:#fff;border-bottom:1px solid #F0F0F5"></div>
<div style="left:1762px;top:240px;width:150px;height:19px;background:#fff;border-bottom:1px solid #F0F0F5"></div>
<span class="t" style="left:1637px;top:240.5px;line-height:16px;height:16px;color:#6D6D6D;">ItemType</span>
<div style="left:1765px;top:240px;width:147px;height:19px;overflow:hidden"><span class="t" style="left:0.5px;top:0.5px;line-height:16px;color:#6D6D6D;font-weight:bold;-webkit-text-stroke:0;">5</span></div>
<div style="left:1633px;top:259px;width:128px;height:19px;background:#fff;border-bottom:1px solid #F0F0F5"></div>
<div style="left:1762px;top:259px;width:150px;height:19px;background:#fff;border-bottom:1px solid #F0F0F5"></div>
<span class="t" style="left:1637px;top:259.5px;line-height:16px;height:16px;color:#6D6D6D;">PathName</span>
<div style="left:1765px;top:259px;width:147px;height:19px;overflow:hidden"><span class="t" style="left:0.5px;top:0.5px;line-height:16px;color:#6D6D6D;font-weight:bold;-webkit-text-stroke:0;">TIID^Device 1 (EtherCAT)^Term 1</span></div>
<div style="left:1619px;top:278px;width:294px;height:19px;background:#EEEEF2"></div>
<div style="left:1621px;top:282px;width:9px;height:9px;"><svg width="9" height="9" viewBox="0 0 9 9"><rect x=".5" y=".5" width="8" height="8" fill="#fff" stroke="#1E1E1E"/><path d="M2.500 4.500h4" stroke="#1E1E1E"/></svg></div>
<span class="t" style="left:1637px;top:278.5px;line-height:16px;height:16px;font-weight:bold;-webkit-text-stroke:0;color:#1E1E1E;">Persistent</span>
<div style="left:1633px;top:297px;width:128px;height:19px;background:#fff;border-bottom:1px solid #F0F0F5"></div>
<div style="left:1762px;top:297px;width:150px;height:19px;background:#fff;border-bottom:1px solid #F0F0F5"></div>
<span class="t" style="left:1637px;top:297.5px;line-height:16px;height:16px;color:#1E1E1E;">Save in own File</span>
<div style="left:1765px;top:297px;width:147px;height:19px;overflow:hidden"><span class="t" style="left:0.5px;top:0.5px;line-height:16px;color:#1E1E1E;font-weight:bold;-webkit-text-stroke:0;letter-spacing:-0.805px;">False</span></div>
<div style="left:1619px;top:927px;width:294px;height:1px;background:#EEEEF2"></div>
<span class="t" style="left:1624px;top:934px;line-height:16px;height:16px;font-weight:bold;-webkit-text-stroke:0;color:#1E1E1E;letter-spacing:-0.193px;">Misc</span>
<div style="left:1617px;top:990px;width:66px;height:20px;background:#fff"></div>
<span class="t" style="left:1623px;top:992px;line-height:16px;height:16px;color:#1E1E1E;">Properties</span>
<div style="left:1682px;top:991px;width:54px;height:19px;background:#4D6082"></div>
<span class="t" style="left:1688px;top:993px;line-height:16px;height:16px;color:#fff;">Toolbox</span>
<!-- status bar -->
<div style="left:0px;top:1017px;width:1920px;height:23px;background:#007ACC"></div>
<div style="left:3px;top:1022px;width:17px;height:12px;"><svg width="17" height="12" viewBox="0 0 17 12"><path d="M3.500 1h12l-2.500 10h-12z" fill="none" stroke="#fff" stroke-width="1.300"/></svg></div>
<span class="t" style="left:28px;top:1021px;line-height:16px;height:16px;color:#fff;">Ready</span>
<div style="left:1479px;top:1021px;width:17px;height:13px;background:#33B933"></div>
<div style="left:1479px;top:1034px;width:17px;height:3px;background:#D9B000"></div>
<div style="left:1481px;top:1021px;width:13px;height:13px;"><svg width="13" height="13" viewBox="0 0 16 16"><path d="M8 2.500l1 .2.3 1.200 1 .5 1.100-.6.9.9-.6 1.100.5 1 1.200.3v1.400l-1.200.3-.5 1 .6 1.100-.9.9-1.100-.6-1 .5-.3 1.200H7.600l-.3-1.200-1-.5-1.100.6-.9-.9.6-1.100-.5-1L3.200 8.800V7.400l1.200-.3.5-1-.6-1.100.9-.9 1.100.6 1-.5.3-1.200z" fill="#D0D0D0"/></svg></div>
<div style="left:1496px;top:1021px;width:15px;height:13px;background:#0C74D6;border:1px solid #BFDCF7;border-bottom:none"></div>
<div style="left:1496px;top:1034px;width:15px;height:3px;background:#D9B000"></div>
<span class="t" style="left:1503.5px;top:1021.5px;line-height:13px;height:13px;color:#fff;font-weight:bold;font-size:10px;">1</span>
<div style="left:1754px;top:1023px;width:9px;height:12px;"><svg width="9" height="12" viewBox="0 0 9 12"><path d="M4.500 11.500v-8.500M1 5.800l3.500-3.600 3.500 3.600" fill="none" stroke="#fff" stroke-width="1.900"/></svg></div>
<span class="t" style="left:1773.5px;top:1021px;line-height:16px;height:16px;color:#fff;letter-spacing:0.217px;">Add to Source Control</span>
<div style="left:1897px;top:1027px;width:8px;height:4px;"><svg width="8" height="4" viewBox="0 0 8 4"><path d="M0 4h8l-4-4z" fill="#fff"/></svg></div>
<!-- taskbar -->
<div style="left:0px;top:1040px;width:1920px;height:40px;background:linear-gradient(90deg,#2D2927 0%,#312B28 40%,#2C2826 100%)"></div>
<div style="left:344px;top:1040px;width:48px;height:40px;background:#4B4644"></div>
<div style="left:344px;top:1078px;width:48px;height:2px;background:#76B9ED"></div>
<div style="left:397px;top:1078px;width:40px;height:2px;background:#76B9ED"></div>
<div style="left:16px;top:1052px;width:17px;height:17px;"><svg width="17" height="17" viewBox="0 0 17 17"><path d="M0 2.300l7-1v6.700h-7zM8 1.200l9-1.200v8h-9zM0 9h7v6.700l-7-1zM8 9h9v8l-9-1.200z" fill="#fff"/></svg></div>
<div style="left:63px;top:1052px;width:18px;height:16px;"><svg width="18" height="16" viewBox="0 0 18 16"><path d="M1 .5h10M1 15.500h10" stroke="#fff" stroke-width="1"/><rect x="1.500" y="3.500" width="9" height="9" fill="none" stroke="#fff" stroke-width="1.200"/><path d="M14 .5v15M16.500 3v3M16.500 9v3" stroke="#fff" stroke-width="1.200"/></svg></div>
<div style="left:111px;top:1050px;width:23px;height:20px;"><svg width="23" height="20" viewBox="0 0 23 20"><path d="M1 2h7l2 2.500h12v3h-21z" fill="#E8A400"/><path d="M1 5.500h21v13h-21z" fill="#FFD766"/><path d="M1 7h21" stroke="#FFE9A0" stroke-width="1.500"/><path d="M6 12.500h11v6h-3v-3h-5v3h-3z" fill="#3C8FE0"/></svg></div>
<div style="left:160px;top:1049px;width:23px;height:23px;"><svg width="23" height="23" viewBox="0 0 24 24"><circle cx="12" cy="12" r="11" fill="#DB4437"/><path d="M12 12L2.500 6.500a11 11 0 0 0 6 16z" fill="#0F9D58"/><path d="M12 12l-3.500 10.500a11 11 0 0 0 14-15z" fill="#FFCD40"/><path d="M2.500 6.500a11 11 0 0 1 20 1l-10.500 0z" fill="#DB4437"/><circle cx="12" cy="12" r="5.200" fill="#fff"/><circle cx="12" cy="12" r="4.100" fill="#4285F4"/></svg></div>
<div style="left:208px;top:1049px;width:24px;height:22px;"><svg width="24" height="22" viewBox="0 0 24 22"><path d="M9 2l12 .5-2 17-15-.5z" fill="#BFE6F2"/><path d="M9 2l12 .5-.5 3.500-12-.5z" fill="#E8F6FA"/><path d="M9 2l-5 17 3 2 14-1.500" fill="none" stroke="#6FA8B8" stroke-width="1"/><path d="M19 19.500l3 .5-1-12z" fill="#C8A060"/></svg></div>
<div style="left:258px;top:1050px;width:23px;height:19px;"><svg width="23" height="19" viewBox="0 0 23 19"><rect x=".5" y=".5" width="22" height="18" fill="#000" stroke="#A0A0A0"/><path d="M.5 2.500h22" stroke="#C0C0C0" stroke-width="2"/><path d="M3 7.500h2M6 7.500h1M8 7.500h2M12 8.500h6" stroke="#E0E0E0" stroke-width="1.200"/></svg></div>
<div style="left:309px;top:1048px;width:19px;height:24px;"><svg width="19" height="24" viewBox="0 0 19 24"><path d="M1 1h12l5 5v17h-17z" fill="#fff" stroke="#1A6FB8" stroke-width="1.500"/><path d="M13 1l5 5h-5z" fill="#1A6FB8"/><path d="M4 9.500h11M4 12.500h5M4 15.500h5M4 18.500h11" stroke="#1A6FB8" stroke-width="1.500"/><rect x="10.500" y="11.500" width="5" height="4.500" fill="#1A6FB8"/></svg></div>
<div style="left:356px;top:1048px;width:24px;height:24px;"><svg width="24" height="24" viewBox="0 0 20 20"><rect width="20" height="20" rx="1" fill="url(#gti)"/><path d="M9.500 2.500v14.500" stroke="#C49210" stroke-width=".7"/><path d="M9 2.500l-2 .6-1.700 1.300-1.500 1.800-.7 2 0 2.500.9 2.200 1.700 1.800 2 1 1.500.3" fill="none" stroke="#B9850C" stroke-width="1" stroke-dasharray="1.800 1.200"/><path d="M10 2.800l1.500 0 .5 1.500 1.200.5 1.300-.8 1.100 1.100-.8 1.300.5 1.200 1.500.4v1.600l-1.500.4-.5 1.200.8 1.300-1.100 1.100-1.300-.8-1.200.5-.5 1.500h-1.500" fill="none" stroke="#C8981A" stroke-width=".9"/><path d="M5.500 10.500l3.500-2.500M6.500 8l2.500 3" stroke="#B9850C" stroke-width="1"/></svg></div>
<div style="left:404px;top:1047px;width:26px;height:26px;"><svg width="26" height="26" viewBox="0 0 26 26"><path d="M2 15c0-6 7-10 13-8 4 1.500 5 6 2 8-2 1.200-3 2-2 4s-1 3-4 3c-5 0-9-3-9-7z" fill="#E8ECF4" stroke="#8A94A8" stroke-width="1"/><circle cx="6.500" cy="13" r="1.600" fill="#E8402A"/><circle cx="10.500" cy="10" r="1.600" fill="#F0B020"/><circle cx="7.500" cy="17.500" r="1.600" fill="#2A78D8"/><circle cx="14.500" cy="11" r="1.500" fill="#3CB048"/><path d="M12 19l10-15 1.500 1-8.500 15.500z" fill="#D89048"/><path d="M22 4l1.500-3 1 4z" fill="#B86A20"/></svg></div>
<div style="left:1671px;top:1056px;width:12px;height:7px;"><svg width="12" height="7" viewBox="0 0 12 7"><path d="M.8 6.500l5.200-5.500 5.200 5.500" fill="none" stroke="#fff" stroke-width="1.200"/></svg></div>
<div style="left:1693px;top:1053px;width:17px;height:13px;"><svg width="17" height="13" viewBox="0 0 17 13"><rect x="3.500" y="3.500" width="12" height="7" fill="none" stroke="#fff" stroke-width="1"/><rect x="5" y="5" width="7" height="4" fill="#fff"/><path d="M16 5.500v3M1.500 .5v4M3.500 .5v4M.5 4.500h4v2l-2 1.500v3" fill="none" stroke="#fff" stroke-width="1"/></svg></div>
<div style="left:1719px;top:1052px;width:15px;height:15px;"><svg width="15" height="15" viewBox="0 0 15 15"><path d="M1 14a13 13 0 0 1 13-13" fill="none" stroke="#9A9A9A" stroke-width="1"/><path d="M4.500 14a9.500 9.500 0 0 1 9.500-9.500" fill="none" stroke="#9A9A9A" stroke-width="1"/><path d="M8 14a6 6 0 0 1 6-6" fill="none" stroke="#9A9A9A" stroke-width="1"/><path d="M11 14a3 3 0 0 1 3-3v3z" fill="#fff"/></svg></div>
<div style="left:1740px;top:1053px;width:17px;height:14px;"><svg width="17" height="14" viewBox="0 0 17 14"><path d="M.5 4.500h3l4-3.500v12l-4-3.500h-3z" fill="none" stroke="#fff" stroke-width="1"/><path d="M10 4.500c1.200 1.200 1.200 3.800 0 5M12 2.500c2.500 2.500 2.500 6.500 0 9M14 .8c3.500 3.500 3.500 9 0 12.500" fill="none" stroke="#fff" stroke-width="1"/></svg></div>
<span class="t" style="left:1767px;top:1052px;line-height:16px;height:16px;color:#fff;font-size:12px;">ENG</span>
<span class="t" style="left:1801px;top:1043px;width:60px;text-align:center;line-height:16px;color:#fff;font-size:12px">11:30</span>
<span class="t" style="left:1796px;top:1060px;width:70px;text-align:center;line-height:16px;color:#fff;font-size:12px;letter-spacing:-0.2px">26/06/2020</span>
<div style="left:1878px;top:1051px;width:18px;height:18px;"><svg width="18" height="18" viewBox="0 0 18 18"><path d="M1 1h16v12h-9l-3.500 3.500v-3.500h-3.500z" fill="#fff"/><path d="M4 4.500h10M4 7h10M4 9.500h7" stroke="#2B2826" stroke-width="1"/></svg></div>
<!-- context menu -->
<div style="left:794px;top:477px;width:300px;height:197px;background:rgba(0,0,0,.22);filter:blur(2px)"></div>
<div style="left:791px;top:474px;width:299px;height:196px;background:#EAF0FF;border:1px solid #9BA7B7"></div>
<div style="left:792px;top:475px;width:26px;height:194px;background:#F1F5FF"></div>
<span class="t" style="left:827.3px;top:480.5px;line-height:16px;height:16px;color:#111;letter-spacing:0.192px;">Add New Item...</span>
<span class="t" style="left:1001.4px;top:480.5px;line-height:16px;height:16px;color:#111;letter-spacing:0.382px;">Ctrl+Shift+A</span>
<span class="t" style="left:827.3px;top:502.5px;line-height:16px;height:16px;color:#111;letter-spacing:-0.090px;">Delete</span>
<span class="t" style="left:1001.4px;top:502.5px;line-height:16px;height:16px;color:#111;letter-spacing:-0.483px;">Del</span>
<div style="left:823px;top:522px;width:263px;height:1px;background:#BEC3CB"></div>
<span class="t" style="left:827.3px;top:527.5px;line-height:16px;height:16px;color:#111;letter-spacing:-0.109px;">Edit</span>
<div style="left:823px;top:547px;width:263px;height:1px;background:#BEC3CB"></div>
<div style="left:793px;top:549px;width:295px;height:22px;background:#FDF4BF"></div>
<span class="t" style="left:827.3px;top:552.5px;line-height:16px;height:16px;color:#111;letter-spacing:0.110px;">Export XML Description...</span>
<span class="t" style="left:827.3px;top:574.5px;line-height:16px;height:16px;color:#111;letter-spacing:0.220px;">Import XML Description...</span>
<div style="left:823px;top:594px;width:263px;height:1px;background:#BEC3CB"></div>
<span class="t" style="left:827.3px;top:599.5px;line-height:16px;height:16px;color:#111;letter-spacing:0.052px;">Print...</span>
<span class="t" style="left:1001.4px;top:599.5px;line-height:16px;height:16px;color:#111;letter-spacing:0.104px;">Ctrl+P</span>
<div style="left:823px;top:619px;width:263px;height:1px;background:#BEC3CB"></div>
<span class="t" style="left:827.3px;top:624.5px;line-height:16px;height:16px;color:#111;letter-spacing:0.280px;">Copy</span>
<span class="t" style="left:1001.4px;top:624.5px;line-height:16px;height:16px;color:#111;letter-spacing:0.259px;">Ctrl+C</span>
<div style="left:823px;top:644px;width:263px;height:1px;background:#BEC3CB"></div>
<span class="t" style="left:827.3px;top:649.5px;line-height:16px;height:16px;color:#111;letter-spacing:-0.048px;">Export List...</span>
<svg class="i" style="left:797px;top:480px;" width="16" height="16"><use href="#additem"/></svg>
<div style="left:798px;top:503px;width:14px;height:14px;"><svg width="14" height="14" viewBox="0 0 14 14"><path d="M1.500 1.500l11 11M12.500 1.500l-11 11" stroke="#A31515" stroke-width="2"/></svg></div>
<div style="left:798px;top:600px;width:16px;height:14px;"><svg width="16" height="14" viewBox="0 0 16 14"><path d="M4 4v-3h8v3" fill="#fff" stroke="#2B2B2B" stroke-width="1.200"/><rect x="1" y="4" width="14" height="6" fill="#2B2B2B"/><rect x="4" y="8" width="8" height="5" fill="#fff" stroke="#2B2B2B" stroke-width="1.200"/></svg></div>
<div style="left:799px;top:624px;width:14px;height:16px;"><svg width="14" height="16" viewBox="0 0 14 16"><path d="M4.500 4.500v-3h6l2 2v7h-4" fill="#F5F7FB" stroke="#2B2B2B"/><rect x="1.500" y="5.500" width="6.500" height="9" fill="#F5F7FB" stroke="#2B2B2B"/></svg></div>
</body></html>
